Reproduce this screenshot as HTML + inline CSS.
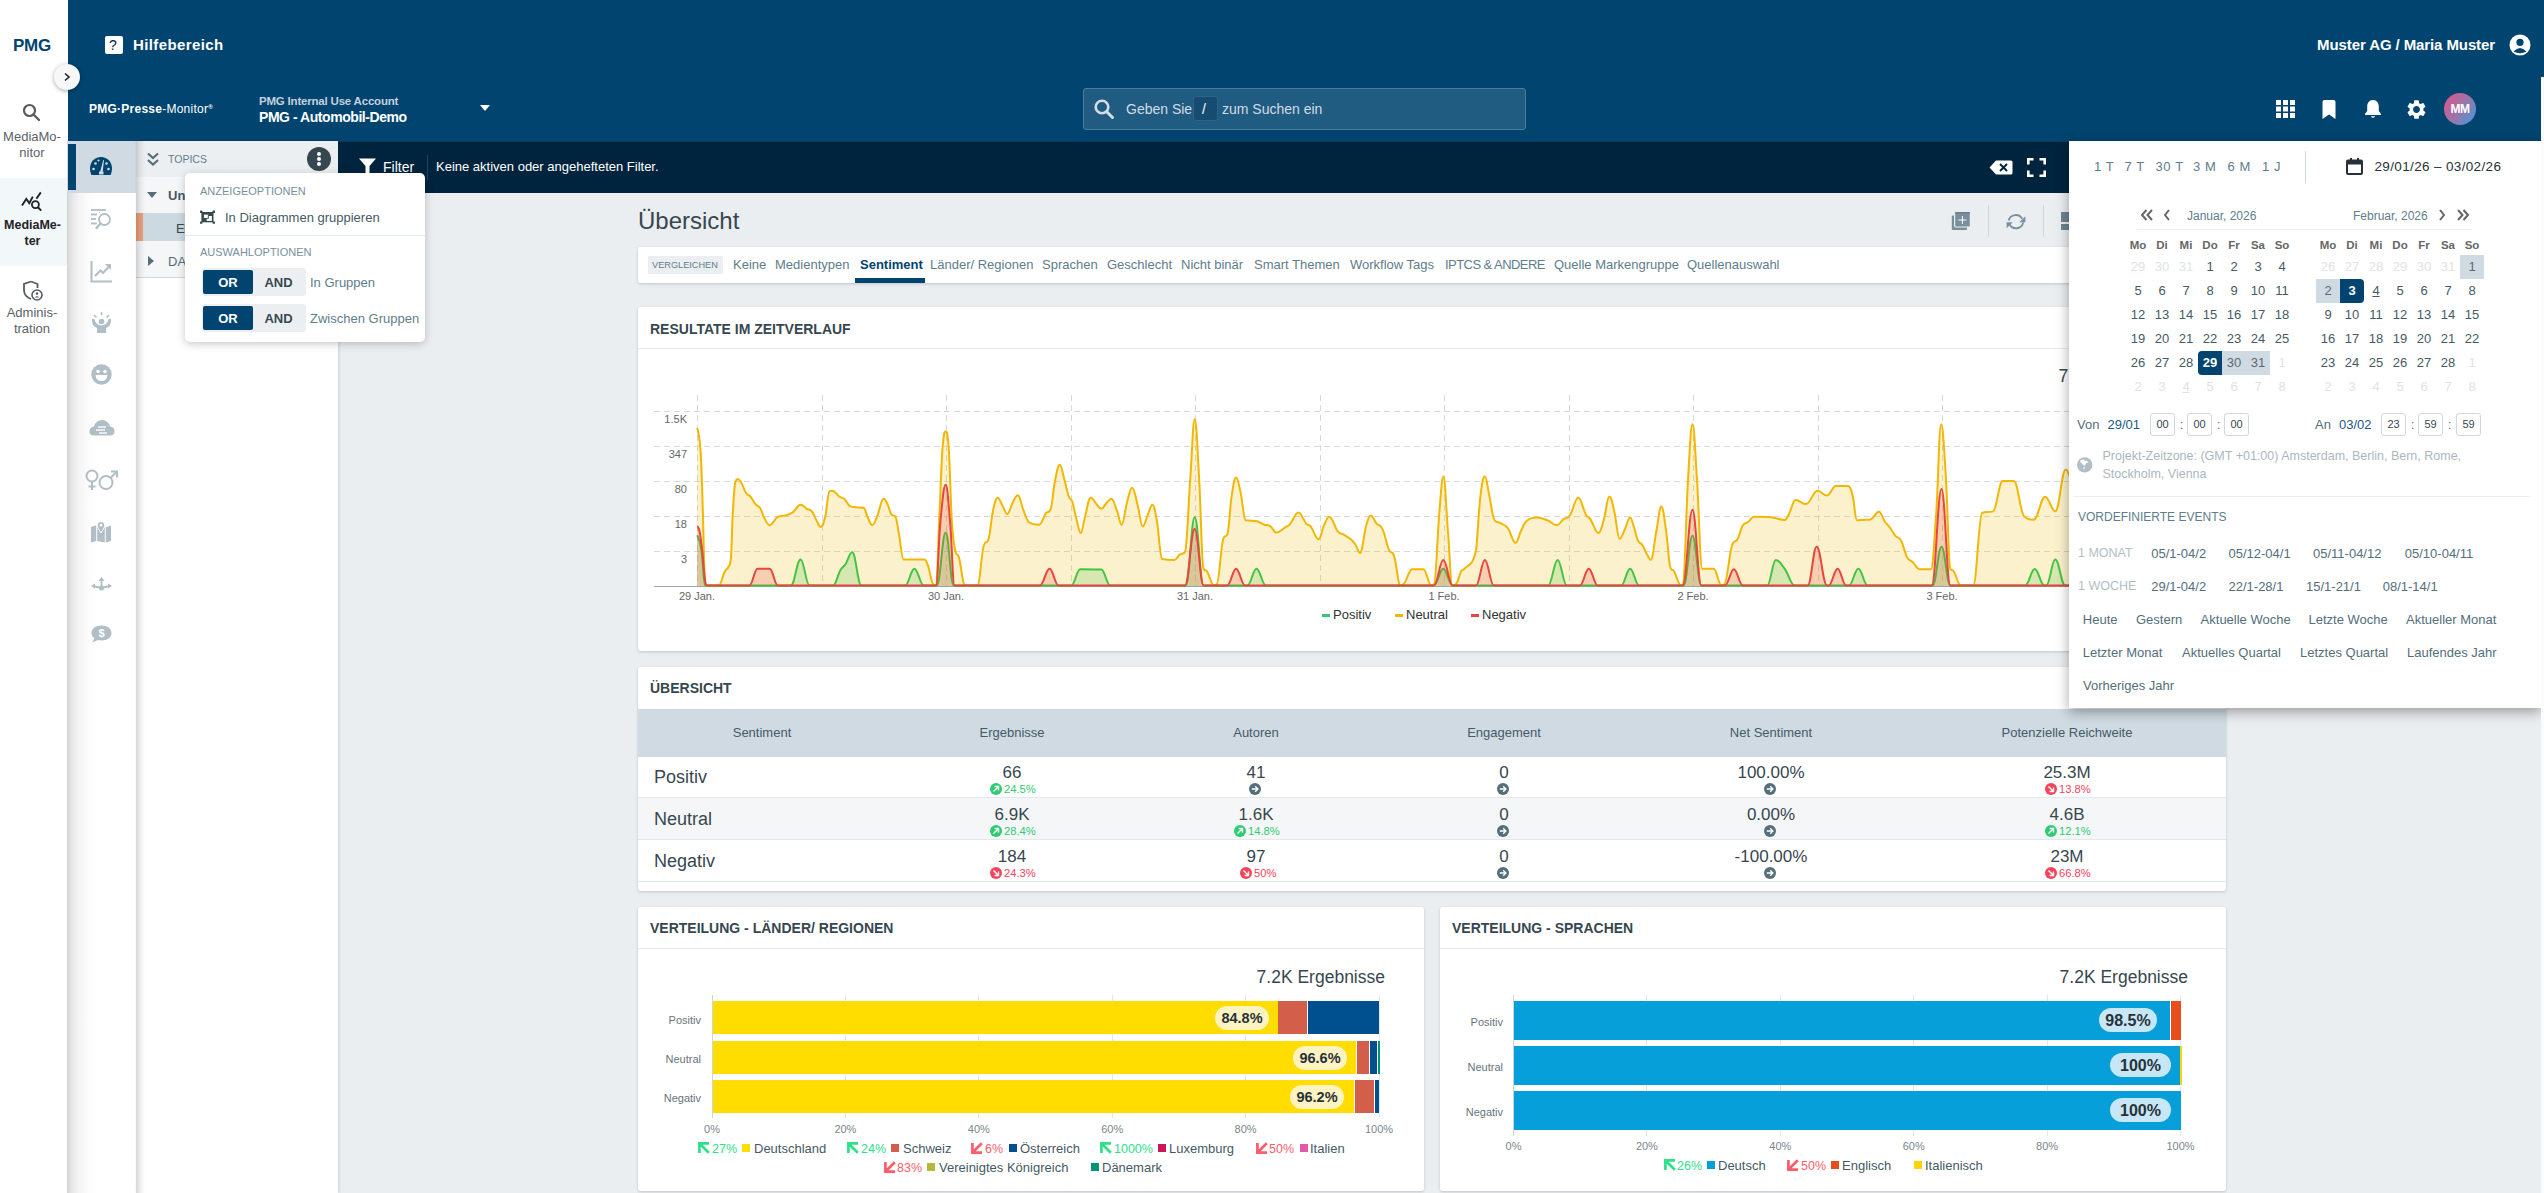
<!DOCTYPE html>
<html><head><meta charset="utf-8">
<style>
*{box-sizing:border-box;margin:0;padding:0}
html,body{width:2544px;height:1193px;overflow:hidden;background:#ebeef1;font-family:"Liberation Sans",sans-serif;color:#37474f}
.a{position:absolute}
.t{position:absolute;white-space:nowrap;line-height:1}
#leftnav{left:0;top:0;width:68px;height:1193px;background:#fff}
#header{left:68px;top:0;width:2476px;height:141px;background:#00446f}
#iconbar{left:67px;top:141px;width:69px;height:1052px;background:linear-gradient(to right,#d2d2d2 0,#dedede 2px,#e9e9e9 6px,#f4f4f4 12px,#fbfbfb 20px,#fff 30px)}
#topics{left:136px;top:141px;width:202px;height:1052px;background:#fff;box-shadow:1px 0 3px rgba(0,0,0,.12)}
#filterbar{left:338px;top:141px;width:2206px;height:52px;background:#00243d}
.card{position:absolute;background:#fff;border-radius:3px;box-shadow:0 1px 3px rgba(0,0,0,.18)}
.ch{position:absolute;left:12px;top:0;font-weight:bold;font-size:15px;color:#37474f;line-height:1}
</style></head><body>
<!-- LEFT NAV -->
<div id="leftnav" class="a">
  <div class="t" style="left:13px;top:37px;font-size:17px;font-weight:bold;color:#00446f;letter-spacing:-0.3px">PMG</div>
  <svg class="a" style="left:21px;top:102px" width="20" height="20" viewBox="0 0 20 20"><circle cx="8.5" cy="8.5" r="5.5" fill="none" stroke="#555d62" stroke-width="2.2"/><line x1="12.5" y1="12.5" x2="18" y2="18" stroke="#555d62" stroke-width="2.4" stroke-linecap="round"/></svg>
  <div class="t" style="left:0;width:64px;text-align:center;top:129px;font-size:13px;color:#5b6367;line-height:16px">MediaMo-<br>nitor</div>
  <div class="a" style="left:0;top:178px;width:68px;height:88px;background:#f2f7fa"></div>
  <svg class="a" style="left:21px;top:191px" width="22" height="21" viewBox="0 0 22 21"><polyline points="1,14.6 5.3,8 8.3,12.1 11.8,5.6" fill="none" stroke="#1f2326" stroke-width="1.9" stroke-linejoin="miter"/><line x1="15.4" y1="7.8" x2="19.8" y2="1.4" stroke="#1f2326" stroke-width="1.9"/><circle cx="14.4" cy="13.6" r="3.5" fill="none" stroke="#1f2326" stroke-width="1.8"/><line x1="16.9" y1="16.3" x2="20.2" y2="19.6" stroke="#1f2326" stroke-width="2"/></svg>
  <div class="t" style="left:0;width:65px;text-align:center;top:217px;font-size:12.5px;font-weight:bold;color:#1f2326;line-height:16px">MediaMe-<br>ter</div>
  <svg class="a" style="left:22px;top:280px" width="22" height="22" viewBox="0 0 22 22"><path d="M9 1.5 L2 4 V10 C2 14.5 5 17.5 9 19 M9 1.5 L15.5 4 V8" fill="none" stroke="#555d62" stroke-width="1.8"/><circle cx="15" cy="15" r="5" fill="#fff" stroke="#555d62" stroke-width="1.6"/><circle cx="15" cy="13.5" r="1.2" fill="#555d62"/><path d="M12.8 17.5 Q15 15 17.2 17.5" fill="#555d62"/></svg>
  <div class="t" style="left:0;width:64px;text-align:center;top:305px;font-size:13px;color:#5b6367;line-height:16px">Adminis-<br>tration</div>
</div>
<div class="a" style="left:54px;top:64px;width:26px;height:26px;border-radius:50%;background:#f7f7f7;box-shadow:0 1px 4px rgba(0,0,0,.35);z-index:5"></div>
<svg class="a" style="z-index:6;left:62px;top:72px" width="10" height="10" viewBox="0 0 10 10"><polyline points="3,1.5 7,5 3,8.5" fill="none" stroke="#222" stroke-width="1.6"/></svg>

<!-- HEADER -->
<div id="header" class="a">
  <div class="a" style="left:37px;top:36px;width:18px;height:18px;background:#fff;border-radius:2px"></div>
  <div class="t" style="left:41px;top:38px;font-size:14px;color:#00243d;font-weight:normal">?</div>
  <div class="t" style="left:65px;top:37px;font-size:15px;font-weight:bold;color:#fff;letter-spacing:0.4px">Hilfebereich</div>
  <div class="t" style="right:49px;top:37px;font-size:15px;font-weight:bold;color:#fff;letter-spacing:-0.1px">Muster AG / Maria Muster</div>
  <svg class="a" style="left:2441px;top:34px" width="22" height="22" viewBox="0 0 22 22"><circle cx="11" cy="11" r="10.5" fill="#fff"/><circle cx="11" cy="8.3" r="3.6" fill="#00446f"/><path d="M4.5 17.5 Q11 10.5 17.5 17.5 Q11 21 4.5 17.5Z" fill="#00446f"/></svg>
  <div class="t" style="left:21px;top:103px;font-size:12px;font-weight:bold;color:#fff;letter-spacing:0.25px">PMG·Presse<span style="font-weight:normal">-Monitor</span><sup style="font-size:6px;vertical-align:4px">®</sup></div>
  <div class="t" style="left:191px;top:96px;font-size:11.5px;font-weight:bold;color:#c3d2dc;letter-spacing:-0.2px">PMG Internal Use Account</div>
  <div class="t" style="left:191px;top:110px;font-size:14px;font-weight:bold;color:#fff;letter-spacing:-0.45px">PMG - Automobil-Demo</div>
  <svg class="a" style="left:412px;top:105px" width="10" height="6" viewBox="0 0 10 6"><polygon points="0,0 10,0 5,6" fill="#fff"/></svg>
  <div class="a" style="left:1015px;top:88px;width:443px;height:42px;background:#205b82;border:1px solid #4f7c9a;border-radius:3px"></div>
  <svg class="a" style="left:1025px;top:98px" width="22" height="22" viewBox="0 0 22 22"><circle cx="9" cy="9" r="6.3" fill="none" stroke="#d2dde5" stroke-width="2.6"/><line x1="13.5" y1="13.5" x2="19.5" y2="19.5" stroke="#d2dde5" stroke-width="3" stroke-linecap="round"/></svg>
  <div class="t" style="left:1058px;top:102px;font-size:14px;color:#d2dde5">Geben Sie</div>
  <div class="a" style="left:1125px;top:96px;width:25px;height:25px;background:#164c71;border:1px solid #2f6385;border-radius:3px"></div>
  <div class="t" style="left:1134px;top:102px;font-size:14px;color:#fff">/</div>
  <div class="t" style="left:1154px;top:102px;font-size:14px;color:#d2dde5">zum Suchen ein</div>
  <!-- right icons -->
  <svg class="a" style="left:2208px;top:100px" width="19" height="18" viewBox="0 0 19 18"><g fill="#fff"><rect x="0" y="0" width="5" height="5"/><rect x="7" y="0" width="5" height="5"/><rect x="14" y="0" width="5" height="5"/><rect x="0" y="6.5" width="5" height="5"/><rect x="7" y="6.5" width="5" height="5"/><rect x="14" y="6.5" width="5" height="5"/><rect x="0" y="13" width="5" height="5"/><rect x="7" y="13" width="5" height="5"/><rect x="14" y="13" width="5" height="5"/></g></svg>
  <svg class="a" style="left:2253px;top:100px" width="16" height="19" viewBox="0 0 16 19"><path d="M1.5 2 Q1.5 0 3.5 0 H12.5 Q14.5 0 14.5 2 V19 L8 14.5 L1.5 19Z" fill="#fff"/></svg>
  <svg class="a" style="left:2296px;top:99px" width="18" height="20" viewBox="0 0 18 20"><path d="M9 1 C5 1 3.2 4 3.2 7.5 V12 L1 15 V16 H17 V15 L14.8 12 V7.5 C14.8 4 13 1 9 1Z" fill="#fff"/><path d="M6.8 17.2 Q9 20.5 11.2 17.2Z" fill="#fff"/></svg>
  <svg class="a" style="left:2337px;top:98px" width="23" height="23" viewBox="0 0 24 24"><path fill="#fff" d="M19.14 12.94c.04-.3.06-.61.06-.94 0-.32-.02-.64-.07-.94l2.03-1.58a.49.49 0 0 0 .12-.61l-1.92-3.32a.49.49 0 0 0-.59-.22l-2.39.96c-.5-.38-1.03-.7-1.62-.94l-.36-2.54a.48.48 0 0 0-.48-.41h-3.84c-.24 0-.43.17-.47.41l-.36 2.54c-.59.24-1.13.57-1.62.94l-2.39-.96a.48.48 0 0 0-.59.22L2.74 8.87c-.12.21-.08.47.12.61l2.03 1.58c-.05.3-.09.63-.09.94s.02.64.07.94l-2.03 1.58a.49.49 0 0 0-.12.61l1.92 3.32c.12.22.37.29.59.22l2.39-.96c.5.38 1.03.7 1.62.94l.36 2.54c.05.24.24.41.48.41h3.84c.24 0 .44-.17.47-.41l.36-2.54c.59-.24 1.13-.56 1.62-.94l2.39.96c.22.08.47 0 .59-.22l1.92-3.32c.12-.22.07-.47-.12-.61l-2.01-1.58zM12 15.6c-1.98 0-3.6-1.62-3.6-3.6s1.62-3.6 3.6-3.6 3.6 1.62 3.6 3.6-1.62 3.6-3.6 3.6z"/></svg>
  <div class="a" style="left:2376px;top:93px;width:32px;height:32px;border-radius:50%;background:linear-gradient(125deg,#e0528a 0%,#a471a3 45%,#3f9ce0 100%)"></div>
  <div class="t" style="left:2376px;width:32px;text-align:center;top:103px;font-size:12px;font-weight:bold;color:#fff;letter-spacing:-0.5px">MM</div>
</div>
<div class="a" style="left:2541px;top:77px;width:3px;height:1116px;background:#fbfbfb;z-index:20"></div>
<!-- ICON BAR -->
<div id="iconbar" class="a">
  <div class="a" style="left:1px;top:0;width:68px;height:52px;background:#cfdae3"></div>
  <div class="a" style="left:1px;top:3px;width:8px;height:46px;background:#00446f"></div>
  <svg class="a" style="left:22px;top:15px" width="24" height="20" viewBox="0 0 24 20"><path d="M12 1 C5.5 1 1 6 1 12.5 C1 15 1.6 17 2.5 19 H21.5 C22.4 17 23 15 23 12.5 C23 6 18.5 1 12 1Z" fill="#00446f"/><g fill="#cfdae3"><circle cx="4.5" cy="13" r="1.3"/><circle cx="6.5" cy="7.5" r="1.3"/><circle cx="17.5" cy="7.5" r="1.3"/><circle cx="19.5" cy="13" r="1.3"/><circle cx="9.5" cy="4.5" r="1.1"/></g><path d="M11 16.5 L14.2 4 L15 4.2 L13.6 16.8Z" fill="#cfdae3"/><rect x="10" y="15.5" width="4.5" height="3" fill="#cfdae3"/></svg>
  <svg class="a" style="left:23px;top:67px" width="23" height="22" viewBox="0 0 23 22"><g stroke="#b0bec5" stroke-width="1.8" fill="none"><line x1="1" y1="2" x2="16" y2="2"/><line x1="1" y1="6.5" x2="7" y2="6.5"/><line x1="1" y1="11" x2="6" y2="11"/><line x1="1" y1="15.5" x2="7" y2="15.5"/><circle cx="14.5" cy="11.5" r="5.5"/><line x1="10.5" y1="15.5" x2="6.5" y2="20" stroke-width="2.4" stroke-linecap="round"/></g><g fill="#b0bec5"><rect x="9" y="4" width="1" height="1"/></g></svg>
  <svg class="a" style="left:23px;top:120px" width="23" height="22" viewBox="0 0 23 22"><g fill="none" stroke="#b0bec5" stroke-width="2"><polyline points="1.5,0 1.5,20.5 22,20.5"/><polyline points="5,15 10.5,9.5 13,12 19,5.5"/></g><polygon points="15,3 21,3 21,9" fill="#b0bec5"/></svg>
  <svg class="a" style="left:24px;top:171px" width="21" height="22" viewBox="0 0 21 22"><g stroke="#b0bec5" stroke-width="1.6"><line x1="10.5" y1="0" x2="10.5" y2="3"/><line x1="3" y1="3" x2="5.5" y2="5.5"/><line x1="18" y1="3" x2="15.5" y2="5.5"/></g><circle cx="10.5" cy="9.5" r="2.8" fill="#b0bec5"/><path d="M1 7 Q0.5 14 6 16 V21 H15 V16 Q20.5 14 20 7 H17.5 Q17 12.5 10.5 13.5 Q4 12.5 3.5 7Z" fill="#b0bec5"/></svg>
  <svg class="a" style="left:24px;top:223px" width="21" height="21" viewBox="0 0 21 21"><circle cx="10.5" cy="10.5" r="10.2" fill="#b0bec5"/><circle cx="7" cy="7.5" r="1.8" fill="#fff"/><circle cx="14" cy="7.5" r="1.8" fill="#fff"/><path d="M4.5 11 H16.5 Q16 17 10.5 17 Q5 17 4.5 11Z" fill="#fff"/></svg>
  <svg class="a" style="left:22px;top:278px" width="26" height="17" viewBox="0 0 26 17"><path d="M5 16.5 Q0 16.5 0.5 11.5 Q1 8 5 7.5 Q7 1 13 1 Q19 1 21 7.5 Q25.5 8 25.5 12 Q25.5 16.5 21 16.5Z" fill="#b0bec5"/><g stroke="#fff" stroke-width="1.4"><line x1="9" y1="8" x2="17" y2="8"/><line x1="7" y1="11" x2="16" y2="11"/><line x1="10" y1="14" x2="18" y2="14"/></g></svg>
  <svg class="a" style="left:18px;top:328px" width="34" height="22" viewBox="0 0 34 22"><g fill="none" stroke="#b0bec5" stroke-width="2"><circle cx="7" cy="7" r="5.5"/><line x1="7" y1="12.5" x2="7" y2="21"/><line x1="3.5" y1="17.5" x2="10.5" y2="17.5"/><circle cx="21" cy="13.5" r="6.5"/><line x1="25.5" y1="9" x2="31.5" y2="3"/><polyline points="26,2.5 32,2.5 32,8.5"/></g></svg>
  <svg class="a" style="left:24px;top:380px" width="20" height="22" viewBox="0 0 20 22"><path d="M0 6 L5.2 4.2 V20 L0 21.5Z M6.2 4.5 L13.8 6.2 V21.5 L6.2 20Z M14.8 6.2 L20 4.4 V20 L14.8 21.5Z" fill="#b0bec5"/><path d="M10 0.6 C12.3 0.6 13.8 2.3 13.8 4.3 C13.8 6.3 11.5 9.5 10 12 C8.5 9.5 6.2 6.3 6.2 4.3 C6.2 2.3 7.7 0.6 10 0.6Z" fill="#b0bec5" stroke="#fff" stroke-width="1"/><circle cx="10" cy="4.2" r="1.4" fill="#fff"/></svg>
  <svg class="a" style="left:24px;top:436px" width="21" height="16" viewBox="0 0 21 16"><g stroke="#b0bec5" stroke-width="1.8" fill="none"><line x1="10.5" y1="3" x2="10.5" y2="11"/><line x1="10.5" y1="11" x2="2" y2="9"/><line x1="10.5" y1="11" x2="19" y2="9"/></g><circle cx="10.5" cy="11" r="2.5" fill="#b0bec5"/><polygon points="10.5,0 7.5,4 13.5,4" fill="#b0bec5"/><polygon points="0,9 4,6.5 4,11.5" fill="#b0bec5"/><polygon points="21,9 17,6.5 17,11.5" fill="#b0bec5"/></svg>
  <svg class="a" style="left:24px;top:484px" width="21" height="18" viewBox="0 0 21 18"><path d="M10.5 0.5 C16.5 0.5 20.5 3.5 20.5 8 C20.5 12.5 16.5 15.5 10.5 15.5 C9 15.5 8 15.3 7 15 L1.5 17.5 L3.2 13.2 C1.5 11.8 0.5 10 0.5 8 C0.5 3.5 4.5 0.5 10.5 0.5Z" fill="#b0bec5"/><text x="10.5" y="12.3" text-anchor="middle" font-family="Liberation Sans" font-weight="bold" font-size="11" fill="#fff">$</text></svg>
</div>

<!-- TOPICS PANEL -->
<div id="topics" class="a">
  <div class="a" style="left:0;top:0;width:202px;height:36px;background:#eceff1"></div>
  <div class="a" style="left:0;top:36px;width:202px;height:101px;background:#f5f6f7;border-bottom:1px solid #cfd8dc"></div>
  <svg class="a" style="left:11px;top:11px" width="12" height="15" viewBox="0 0 12 15"><g fill="none" stroke="#546e7a" stroke-width="2.2"><polyline points="1,1.5 6,6 11,1.5"/><polyline points="1,8 6,12.5 11,8"/></g></svg>
  <div class="t" style="left:32px;top:13px;font-size:10.5px;color:#607d8b">TOPICS</div>
  <div class="a" style="left:171px;top:6px;width:24px;height:24px;border-radius:50%;background:#37474f"></div>
  <g></g>
  <div class="a" style="left:181px;top:11px;width:4px;height:4px;border-radius:50%;background:#fff"></div>
  <div class="a" style="left:181px;top:16px;width:4px;height:4px;border-radius:50%;background:#fff"></div>
  <div class="a" style="left:181px;top:21px;width:4px;height:4px;border-radius:50%;background:#fff"></div>
  <svg class="a" style="left:11px;top:51px" width="10" height="6" viewBox="0 0 10 6"><polygon points="0,0 10,0 5,6" fill="#546e7a"/></svg>
  <div class="t" style="left:32px;top:48px;font-size:13px;font-weight:bold;color:#455a64">Ung</div>
  <div class="a" style="left:0;top:72px;width:202px;height:28px;background:#cdd9e1"></div>
  <div class="a" style="left:0;top:72px;width:7px;height:28px;background:#eea07e"></div>
  <div class="t" style="left:40px;top:81px;font-size:13px;color:#37474f;letter-spacing:-0.6px">El</div>
  <svg class="a" style="left:12px;top:115px" width="6" height="10" viewBox="0 0 6 10"><polygon points="0,0 6,5 0,10" fill="#546e7a"/></svg>
  <div class="t" style="left:32px;top:114px;font-size:13px;color:#546e7a">DA</div>
  <div class="a" style="left:0;top:0;width:9px;height:1052px;background:linear-gradient(to right,rgba(0,0,0,.17) 0,rgba(0,0,0,.11) 2px,rgba(0,0,0,.05) 5px,rgba(0,0,0,0) 9px)"></div>
</div>

<!-- FILTER BAR -->
<div id="filterbar" class="a">
  <div class="a" style="left:0;top:0;width:2206px;height:1px;background:#0a3c60"></div>
  <svg class="a" style="left:21px;top:17px" width="17" height="18" viewBox="0 0 17 18"><path d="M0 0.5 H17 L10.5 8 V17.5 L6.5 15.5 V8Z" fill="#fff"/></svg>
  <div class="t" style="left:45px;top:19px;font-size:14px;color:#fff">Filter</div>
  <div class="a" style="left:89px;top:14px;width:1px;height:25px;background:#1a4468"></div>
  <div class="t" style="left:98px;top:19px;font-size:13px;color:#fff">Keine aktiven oder angehefteten Filter.</div>
  <svg class="a" style="left:1651px;top:19px" width="24" height="15" viewBox="0 0 24 15"><path d="M7 0.5 H22 Q23.5 0.5 23.5 2 V13 Q23.5 14.5 22 14.5 H7 L0.5 7.5Z" fill="#fff"/><g stroke="#00243d" stroke-width="2"><line x1="11" y1="4" x2="18" y2="11"/><line x1="18" y1="4" x2="11" y2="11"/></g></svg>
  <svg class="a" style="left:1689px;top:17px" width="19" height="19" viewBox="0 0 19 19"><g fill="none" stroke="#fff" stroke-width="2.6"><polyline points="1.3,6.5 1.3,1.3 6.5,1.3"/><polyline points="12.5,1.3 17.7,1.3 17.7,6.5"/><polyline points="17.7,12.5 17.7,17.7 12.5,17.7"/><polyline points="6.5,17.7 1.3,17.7 1.3,12.5"/></g></svg>
</div>

<!-- POPUP -->
<div id="pop" class="a" style="left:185px;top:173px;width:240px;height:169px;background:#fff;border-radius:5px;box-shadow:0 2px 8px rgba(0,0,0,.22)">
  <div class="t" style="left:15px;top:13px;font-size:11px;color:#78909c">ANZEIGEOPTIONEN</div>
  <svg class="a" style="left:11px;top:33px" width="24" height="24" viewBox="0 0 24 24"><rect x="5.4" y="6" width="12.1" height="10.3" fill="#37474f"/><rect x="10.7" y="10" width="5.2" height="4.9" fill="#fff"/><rect x="7.5" y="8.1" width="4.8" height="4.3" fill="#fff" stroke="#37474f" stroke-width="0.9"/><g fill="#37474f"><rect x="4" y="4.6" width="2.4" height="2.4" rx="0.6"/><rect x="16.6" y="4.6" width="2.4" height="2.4" rx="0.6"/><rect x="4" y="15.4" width="2.4" height="2.4" rx="0.6"/><rect x="16.6" y="15.4" width="2.4" height="2.4" rx="0.6"/></g></svg>
  <div class="t" style="left:40px;top:38px;font-size:13px;color:#455a64">In Diagrammen gruppieren</div>
  <div class="a" style="left:0;top:62px;width:240px;height:1px;background:#e3e8eb"></div>
  <div class="t" style="left:15px;top:74px;font-size:11px;color:#78909c">AUSWAHLOPTIONEN</div>
  <div class="a" style="left:17px;top:95px;width:104px;height:28px;background:#eceff1;border-radius:3px"></div>
  <div class="a" style="left:18px;top:97px;width:50px;height:24px;background:#00446f;border-radius:2px"></div>
  <div class="t" style="left:18px;width:50px;text-align:center;top:103px;font-size:13px;font-weight:bold;color:#fff">OR</div>
  <div class="t" style="left:68px;width:51px;text-align:center;top:103px;font-size:13px;font-weight:bold;color:#37474f">AND</div>
  <div class="t" style="left:125px;top:103px;font-size:13px;color:#607d8b">In Gruppen</div>
  <div class="a" style="left:17px;top:131px;width:104px;height:28px;background:#eceff1;border-radius:3px"></div>
  <div class="a" style="left:18px;top:133px;width:50px;height:24px;background:#00446f;border-radius:2px"></div>
  <div class="t" style="left:18px;width:50px;text-align:center;top:139px;font-size:13px;font-weight:bold;color:#fff">OR</div>
  <div class="t" style="left:68px;width:51px;text-align:center;top:139px;font-size:13px;font-weight:bold;color:#37474f">AND</div>
  <div class="t" style="left:125px;top:139px;font-size:13px;color:#607d8b">Zwischen Gruppen</div>
</div>
<!-- TITLE + TOOLS -->
<div class="t" style="left:638px;top:209px;font-size:24px;color:#37474f">Übersicht</div>
<svg class="a" style="left:1951px;top:211px" width="20" height="20" viewBox="0 0 20 20"><rect x="0.8" y="4.4" width="15.2" height="14.6" rx="1" fill="#78909c"/><rect x="3.6" y="0.4" width="15.8" height="15.6" rx="1.2" fill="#78909c" stroke="#eceff1" stroke-width="1.2"/><rect x="4.2" y="1" width="14.6" height="1.6" fill="#6a808c"/><g stroke="#fff" stroke-width="1"><line x1="11.4" y1="5" x2="11.4" y2="13"/><line x1="7.4" y1="9" x2="15.4" y2="9"/></g></svg>
<div class="a" style="left:1988px;top:205px;width:1px;height:32px;background:#cfd8dc"></div>
<svg class="a" style="left:2006px;top:212px" width="20" height="19" viewBox="0 0 20 19"><g fill="none" stroke="#78909c" stroke-width="1.9"><path d="M2.6 8.5 A7.4 7.4 0 0 1 16.2 6.8"/><path d="M17.2 10.6 A7.4 7.4 0 0 1 3.6 12.6"/></g><polygon points="19.4,4.2 19.4,10.3 13.3,10.3" fill="#78909c"/><polygon points="0.6,16.3 0.6,10.2 6.7,10.2" fill="#78909c"/></svg>
<div class="a" style="left:2043px;top:205px;width:1px;height:32px;background:#cfd8dc"></div>
<div class="a" style="left:2061px;top:212px;width:12px;height:10px;background:#6f8591"></div>
<div class="a" style="left:2061px;top:224px;width:12px;height:6px;background:#6f8591"></div>

<!-- TABS -->
<div class="card" style="left:638px;top:247px;width:1588px;height:36px;border-radius:2px">
  <div class="a" style="left:10px;top:9px;width:75px;height:18px;background:#eceff1;border-radius:1px"></div>
  <div class="t" style="left:14px;top:14px;font-size:9.2px;color:#607d8b">VERGLEICHEN</div>
  <div class="t" style="left:95px;top:11px;font-size:13px;color:#607d8b">Keine</div>
  <div class="t" style="left:137px;top:11px;font-size:13px;color:#607d8b">Medientypen</div>
  <div class="t" style="left:222px;top:11px;font-size:13px;font-weight:bold;color:#00446f">Sentiment</div>
  <div class="a" style="left:217px;top:31px;width:70px;height:5px;background:#00446f"></div>
  <div class="t" style="left:292px;top:11px;font-size:13px;color:#607d8b">Länder/ Regionen</div>
  <div class="t" style="left:404px;top:11px;font-size:13px;color:#607d8b">Sprachen</div>
  <div class="t" style="left:469px;top:11px;font-size:13px;color:#607d8b">Geschlecht</div>
  <div class="t" style="left:543px;top:11px;font-size:13px;color:#607d8b">Nicht binär</div>
  <div class="t" style="left:616px;top:11px;font-size:13px;color:#607d8b">Smart Themen</div>
  <div class="t" style="left:712px;top:11px;font-size:13px;color:#607d8b">Workflow Tags</div>
  <div class="t" style="left:807px;top:11px;font-size:13px;color:#607d8b;letter-spacing:-0.55px">IPTCS &amp; ANDERE</div>
  <div class="t" style="left:916px;top:11px;font-size:13px;color:#607d8b">Quelle Markengruppe</div>
  <div class="t" style="left:1049px;top:11px;font-size:13px;color:#607d8b">Quellenauswahl</div>
</div>

<!-- CARD 1: RESULTATE -->
<div class="card" style="left:638px;top:307px;width:1588px;height:344px">
  <div class="t" style="left:12px;top:15px;font-size:14px;font-weight:bold;color:#37474f">RESULTATE IM ZEITVERLAUF</div>
  <div class="a" style="left:0;top:41px;width:1588px;height:1px;background:#e6eaed"></div>
  <div class="t" style="right:39px;top:61px;font-size:17.5px;color:#37474f">7.2K Ergebnisse</div>
</div>
<svg class="a" style="left:0;top:0" width="2544" height="1193" viewBox="0 0 2544 1193">
<g stroke="#d9d9d9" stroke-width="1" stroke-dasharray="6,4"><line x1="654" y1="411.5" x2="2226" y2="411.5"/><line x1="654" y1="446.5" x2="2226" y2="446.5"/><line x1="654" y1="481.5" x2="2226" y2="481.5"/><line x1="654" y1="516.5" x2="2226" y2="516.5"/><line x1="654" y1="551.5" x2="2226" y2="551.5"/><line x1="697.5" y1="395" x2="697.5" y2="586"/><line x1="822.5" y1="395" x2="822.5" y2="586"/><line x1="946.5" y1="395" x2="946.5" y2="586"/><line x1="1071.5" y1="395" x2="1071.5" y2="586"/><line x1="1195.5" y1="395" x2="1195.5" y2="586"/><line x1="1320.5" y1="395" x2="1320.5" y2="586"/><line x1="1444.5" y1="395" x2="1444.5" y2="586"/><line x1="1569.5" y1="395" x2="1569.5" y2="586"/><line x1="1693.5" y1="395" x2="1693.5" y2="586"/><line x1="1818.5" y1="395" x2="1818.5" y2="586"/><line x1="1942.5" y1="395" x2="1942.5" y2="586"/></g>
<line x1="654" y1="586.5" x2="2226" y2="586.5" stroke="#9aa5ad" stroke-width="1"/>
<path d="M697.1,427.9C697.1,427.9 698.5,431.8 699.4,439.3C700.1,444.8 700.4,446.0 701.1,460.4C701.8,475.6 702.2,489.6 702.9,513.2C703.6,535.4 703.9,564.4 704.6,574.9C705.2,585.4 705.4,585.4 706.0,585.4C711.1,585.4 713.6,585.4 718.7,585.4C721.2,585.4 722.4,576.0 724.9,571.3C726.3,568.6 727.0,570.2 728.4,567.0C729.4,564.6 730.0,567.0 731.0,557.3C731.7,547.6 732.1,525.3 732.8,513.2C733.9,495.0 734.4,484.1 735.5,481.5C736.5,478.9 737.1,478.9 738.1,478.9C739.5,478.9 740.2,480.8 741.6,483.3C743.4,486.4 744.2,490.4 746.0,493.0C747.8,495.6 748.6,494.4 750.4,496.5C752.5,499.0 753.6,501.9 755.7,504.4C757.5,506.5 758.3,505.2 760.1,508.0C761.9,510.8 762.7,515.4 764.5,518.5C766.6,522.3 767.7,525.2 769.8,525.2C773.0,525.2 774.5,518.2 777.7,516.8C780.9,515.4 782.4,516.3 785.6,515.4C788.4,514.6 789.9,514.4 792.7,512.4C795.9,510.2 797.4,504.8 800.6,504.8C803.1,504.8 804.3,507.3 806.8,508.8C808.9,510.0 809.9,509.0 812.0,511.5C813.8,513.6 814.6,517.2 816.4,520.3C818.2,523.4 819.0,527.0 820.8,527.0C822.6,527.0 823.4,524.0 825.2,516.8C827.0,509.6 827.8,491.7 829.6,491.2C830.7,490.7 831.2,490.7 832.3,490.7C835.1,490.7 836.5,494.6 839.3,496.5C841.4,498.0 842.5,497.3 844.6,499.2C846.7,501.1 847.8,505.3 849.9,506.2C851.7,507.1 852.5,506.9 854.3,507.1C858.2,507.6 860.1,507.1 864.0,508.0C865.4,508.9 866.1,513.9 867.5,516.8C869.4,520.7 870.3,525.2 872.2,525.2C874.1,525.2 875.1,521.2 877.0,516.8C879.7,510.6 881.0,498.8 883.7,498.8C885.3,498.8 886.0,501.2 887.6,504.4C889.0,507.3 889.7,511.4 891.1,514.1C892.9,516.8 893.7,514.1 895.5,516.8C896.9,519.5 897.6,526.9 899.0,534.4C900.8,544.0 901.7,559.4 903.5,559.4C911.9,559.4 916.2,559.4 924.6,559.4C926.0,559.4 926.7,562.0 928.1,566.0C930.2,572.0 931.3,583.2 933.4,584.3C934.4,585.4 935.0,585.4 936.0,585.4C937.4,585.4 938.1,541.7 939.5,513.2C940.9,484.7 941.6,454.2 943.0,442.8C944.1,431.4 944.6,431.4 945.7,431.4C946.7,431.4 947.3,431.4 948.3,442.8C949.7,454.2 950.5,500.0 951.9,522.0C953.3,543.4 954.0,544.9 955.4,551.1C956.8,557.3 957.5,552.3 958.9,557.3C961.4,566.1 962.6,585.4 965.1,585.4C970.0,585.4 972.5,585.4 977.4,585.4C980.2,585.4 981.6,547.5 984.4,544.0C985.8,540.5 986.6,544.0 988.0,540.5C990.1,537.0 991.1,519.0 993.2,509.7C995.0,501.9 995.8,497.7 997.6,497.7C999.4,497.7 1000.2,501.4 1002.0,504.4C1004.1,508.0 1005.2,514.1 1007.3,514.1C1009.4,514.1 1010.5,506.5 1012.6,502.7C1014.7,498.9 1015.8,495.3 1017.9,495.3C1020.0,495.3 1021.1,504.4 1023.2,509.7C1025.3,515.0 1026.4,519.3 1028.5,522.0C1032.7,524.7 1034.8,524.7 1039.0,524.7C1041.8,524.7 1043.2,516.9 1046.0,513.2C1047.8,510.9 1048.7,513.2 1050.5,509.7C1052.3,506.2 1053.1,490.0 1054.9,481.5C1056.9,472.0 1057.8,464.8 1059.8,464.8C1061.6,464.8 1062.6,473.3 1064.4,479.8C1066.2,486.0 1067.0,491.6 1068.8,496.5C1070.2,500.4 1070.9,497.6 1072.3,501.8C1074.1,507.1 1074.9,513.8 1076.7,520.3C1078.3,526.3 1079.2,533.0 1080.8,533.0C1082.3,533.0 1083.1,523.9 1084.6,518.5C1087.1,509.7 1088.3,497.7 1090.8,497.7C1092.9,497.7 1094.0,501.4 1096.1,503.6C1098.2,505.8 1099.3,508.8 1101.4,508.8C1103.5,508.8 1104.6,504.8 1106.7,502.7C1108.6,500.8 1109.5,498.8 1111.4,498.8C1113.7,498.8 1114.9,505.6 1117.2,511.5C1119.0,516.0 1119.8,524.7 1121.6,524.7C1123.7,524.7 1124.8,510.1 1126.9,502.7C1129.0,495.3 1130.1,487.7 1132.2,487.7C1134.3,487.7 1135.4,496.6 1137.5,504.4C1139.6,512.1 1140.6,526.4 1142.7,526.4C1144.8,526.4 1145.9,518.8 1148.0,514.1C1149.8,510.2 1150.6,504.8 1152.4,504.8C1154.2,504.8 1155.0,510.5 1156.8,520.3C1158.9,532.1 1160.0,558.1 1162.1,559.0C1167.0,559.9 1169.5,559.9 1174.4,559.9C1176.5,559.9 1177.6,556.2 1179.7,554.6C1181.8,553.0 1182.9,554.6 1185.0,552.0C1187.1,549.4 1188.2,507.1 1190.3,478.0C1192.1,453.9 1192.9,419.0 1194.7,419.0C1196.5,419.0 1197.3,448.1 1199.1,478.0C1200.9,507.9 1201.7,566.1 1203.5,568.7C1204.9,571.3 1205.6,569.1 1207.0,571.3C1209.8,575.8 1211.2,585.4 1214.0,585.4C1215.1,585.4 1215.6,585.4 1216.7,584.3C1219.5,583.2 1220.9,541.4 1223.7,537.9C1225.1,534.4 1225.9,537.9 1227.3,534.4C1229.1,530.9 1229.9,507.0 1231.7,495.6C1233.5,484.2 1234.3,477.5 1236.1,477.5C1237.9,477.5 1238.7,484.3 1240.5,492.1C1242.6,501.4 1243.6,519.4 1245.7,520.3C1250.3,521.2 1252.6,520.3 1257.2,521.2C1260.0,522.1 1261.3,523.7 1264.1,524.7C1266.2,525.5 1267.3,524.7 1269.4,525.6C1272.2,526.5 1273.6,532.6 1276.4,532.6C1279.9,532.6 1281.7,529.4 1285.2,527.3C1287.0,526.2 1287.8,526.7 1289.6,524.7C1293.1,520.7 1294.9,512.4 1298.4,512.4C1301.6,512.4 1303.1,520.2 1306.3,523.8C1308.1,525.8 1308.9,524.2 1310.7,526.4C1313.9,530.4 1315.5,539.3 1318.7,539.3C1320.8,539.3 1321.8,530.1 1323.9,525.6C1326.0,521.1 1327.1,516.8 1329.2,516.8C1332.7,516.8 1334.5,527.3 1338.0,531.7C1340.1,534.3 1341.2,533.1 1343.3,534.4C1346.5,536.3 1348.0,536.9 1351.2,539.6C1353.0,541.1 1353.8,542.3 1355.6,545.0C1357.4,547.7 1358.2,552.9 1360.0,552.9C1362.5,552.9 1363.7,534.4 1366.2,525.6C1368.0,519.4 1368.8,515.4 1370.6,515.4C1373.1,515.4 1374.3,521.0 1376.8,523.8C1378.9,526.1 1379.9,523.8 1382.0,528.2C1384.8,532.6 1386.3,543.7 1389.1,550.2C1390.9,554.2 1391.7,550.2 1393.5,554.6C1396.3,559.0 1397.7,585.4 1400.5,585.4C1401.6,585.4 1402.1,585.4 1403.2,584.3C1406.7,583.2 1408.5,569.2 1412.0,569.2C1416.6,569.2 1418.8,569.2 1423.4,569.2C1426.6,569.2 1428.1,585.4 1431.3,585.4C1432.4,585.4 1432.9,585.4 1434.0,584.3C1436.1,583.2 1437.2,537.5 1439.3,513.2C1440.9,494.4 1441.8,476.6 1443.4,476.6C1445.2,476.6 1446.1,508.8 1447.9,530.8C1449.7,552.3 1450.5,585.4 1452.3,585.4C1453.7,585.4 1454.4,585.4 1455.8,584.3C1457.9,583.2 1459.0,575.1 1461.1,571.3C1462.5,568.8 1463.2,570.6 1464.6,568.7C1469.2,562.4 1471.5,568.7 1476.1,550.6C1477.9,532.5 1478.7,510.4 1480.5,495.6C1482.3,480.8 1483.1,476.6 1484.9,476.6C1486.7,476.6 1487.5,487.7 1489.3,495.6C1491.4,505.2 1492.5,517.7 1494.6,520.3C1496.7,522.9 1497.8,521.6 1499.9,522.9C1503.1,524.8 1504.6,524.2 1507.8,528.2C1511.0,532.2 1512.5,542.8 1515.7,542.8C1517.8,542.8 1518.9,535.1 1521.0,530.8C1523.1,526.5 1524.2,523.0 1526.3,521.2C1530.5,517.7 1532.6,517.6 1536.8,517.6C1541.0,517.6 1543.2,518.7 1547.4,520.3C1551.3,521.8 1553.2,525.2 1557.1,525.2C1559.5,525.2 1560.8,521.2 1563.2,519.4C1565.7,517.5 1566.9,519.4 1569.4,515.9C1572.9,512.4 1574.7,497.7 1578.2,497.7C1581.4,497.7 1582.9,509.4 1586.1,515.0C1587.9,518.1 1588.7,516.8 1590.5,519.4C1593.7,524.0 1595.3,533.0 1598.5,533.0C1600.6,533.0 1601.6,527.3 1603.7,520.3C1606.0,512.7 1607.1,496.5 1609.4,496.5C1611.4,496.5 1612.3,503.4 1614.3,511.5C1616.4,520.3 1617.5,538.8 1619.6,538.8C1621.7,538.8 1622.8,533.4 1624.9,529.1C1627.0,524.9 1628.0,517.6 1630.1,517.6C1631.5,517.6 1632.1,521.6 1633.5,525.6C1635.3,530.8 1636.1,536.6 1637.9,540.5C1639.7,544.4 1640.5,542.3 1642.3,544.9C1644.1,547.5 1644.9,550.6 1646.7,553.7C1648.3,556.6 1649.2,559.9 1650.8,559.9C1653.0,559.9 1654.2,542.2 1656.4,530.8C1658.4,520.8 1659.3,506.5 1661.3,506.5C1663.2,506.5 1664.2,518.0 1666.1,530.8C1667.9,542.5 1668.7,564.3 1670.5,567.8C1671.9,571.3 1672.6,569.0 1674.0,571.3C1676.8,576.0 1678.3,585.4 1681.1,585.4C1681.8,585.4 1682.1,585.4 1682.8,584.3C1684.9,583.2 1686.0,513.0 1688.1,478.0C1689.9,449.0 1690.7,424.3 1692.5,424.3C1694.3,424.3 1695.1,451.8 1696.9,478.0C1699.0,509.6 1700.1,568.7 1702.2,568.7C1706.8,568.7 1709.0,568.7 1713.6,568.7C1716.8,568.7 1718.3,585.4 1721.5,585.4C1722.6,585.4 1723.1,585.4 1724.2,584.3C1727.7,583.2 1729.5,546.8 1733.0,543.2C1734.8,539.6 1735.6,542.8 1737.4,539.6C1739.5,535.8 1740.6,529.1 1742.7,525.6C1744.8,522.1 1745.9,523.6 1748.0,522.0C1750.4,520.1 1751.7,516.8 1754.1,516.8C1760.1,516.8 1763.1,516.8 1769.1,517.1C1775.4,517.4 1778.6,519.9 1784.9,519.9C1786.7,519.9 1787.5,516.5 1789.3,513.2C1791.8,508.5 1793.0,500.0 1795.5,500.0C1799.7,500.0 1801.9,504.1 1806.1,504.1C1810.7,504.1 1812.9,490.7 1817.5,490.7C1821.3,490.7 1823.2,495.6 1827.0,495.6C1830.5,495.6 1832.3,486.0 1835.8,486.0C1840.8,486.0 1843.2,486.0 1848.2,486.0C1850.0,486.0 1850.8,488.7 1852.6,495.6C1854.4,502.5 1855.2,520.3 1857.0,520.3C1859.4,520.3 1860.7,520.1 1863.1,519.9C1865.9,519.7 1867.4,519.9 1870.2,519.4C1873.7,518.9 1875.5,511.8 1879.0,511.8C1881.4,511.8 1882.7,518.5 1885.1,522.0C1886.9,524.5 1887.7,524.7 1889.5,527.0C1892.0,530.3 1893.2,533.2 1895.7,536.1C1897.8,538.6 1898.9,536.6 1901.0,540.5C1903.4,545.0 1904.7,552.8 1907.1,557.3C1909.2,561.2 1910.3,559.7 1912.4,561.7C1915.2,564.4 1916.7,569.2 1919.5,569.2C1924.1,569.2 1926.3,569.2 1930.9,569.2C1933.0,569.2 1934.1,543.3 1936.2,513.2C1938.2,485.4 1939.1,424.3 1941.1,424.3C1943.0,424.3 1944.0,447.9 1945.9,478.0C1947.7,505.6 1948.5,566.1 1950.3,568.7C1951.7,571.3 1952.4,569.1 1953.8,571.3C1956.6,575.8 1958.0,585.4 1960.8,585.4C1965.8,585.4 1968.2,585.4 1973.2,585.4C1976.8,585.4 1978.6,514.2 1982.2,512.8C1986.5,511.4 1988.7,512.8 1993.0,511.4C1996.9,510.0 1998.8,481.0 2002.7,481.0C2007.1,481.0 2009.4,481.0 2013.8,481.0C2018.0,481.0 2020.1,513.5 2024.3,516.6C2028.1,519.7 2029.9,519.7 2033.7,519.7C2038.3,519.7 2040.6,496.7 2045.2,496.7C2049.2,496.7 2051.3,511.3 2055.3,511.3C2059.5,511.3 2061.6,469.4 2065.8,469.4C2069.5,469.4 2075.0,500.0 2075.0,500.0L2075.0,586L697.1,586Z" fill="#f2b705" fill-opacity="0.2"/><path d="M697.1,427.9C697.1,427.9 698.5,431.8 699.4,439.3C700.1,444.8 700.4,446.0 701.1,460.4C701.8,475.6 702.2,489.6 702.9,513.2C703.6,535.4 703.9,564.4 704.6,574.9C705.2,585.4 705.4,585.4 706.0,585.4C711.1,585.4 713.6,585.4 718.7,585.4C721.2,585.4 722.4,576.0 724.9,571.3C726.3,568.6 727.0,570.2 728.4,567.0C729.4,564.6 730.0,567.0 731.0,557.3C731.7,547.6 732.1,525.3 732.8,513.2C733.9,495.0 734.4,484.1 735.5,481.5C736.5,478.9 737.1,478.9 738.1,478.9C739.5,478.9 740.2,480.8 741.6,483.3C743.4,486.4 744.2,490.4 746.0,493.0C747.8,495.6 748.6,494.4 750.4,496.5C752.5,499.0 753.6,501.9 755.7,504.4C757.5,506.5 758.3,505.2 760.1,508.0C761.9,510.8 762.7,515.4 764.5,518.5C766.6,522.3 767.7,525.2 769.8,525.2C773.0,525.2 774.5,518.2 777.7,516.8C780.9,515.4 782.4,516.3 785.6,515.4C788.4,514.6 789.9,514.4 792.7,512.4C795.9,510.2 797.4,504.8 800.6,504.8C803.1,504.8 804.3,507.3 806.8,508.8C808.9,510.0 809.9,509.0 812.0,511.5C813.8,513.6 814.6,517.2 816.4,520.3C818.2,523.4 819.0,527.0 820.8,527.0C822.6,527.0 823.4,524.0 825.2,516.8C827.0,509.6 827.8,491.7 829.6,491.2C830.7,490.7 831.2,490.7 832.3,490.7C835.1,490.7 836.5,494.6 839.3,496.5C841.4,498.0 842.5,497.3 844.6,499.2C846.7,501.1 847.8,505.3 849.9,506.2C851.7,507.1 852.5,506.9 854.3,507.1C858.2,507.6 860.1,507.1 864.0,508.0C865.4,508.9 866.1,513.9 867.5,516.8C869.4,520.7 870.3,525.2 872.2,525.2C874.1,525.2 875.1,521.2 877.0,516.8C879.7,510.6 881.0,498.8 883.7,498.8C885.3,498.8 886.0,501.2 887.6,504.4C889.0,507.3 889.7,511.4 891.1,514.1C892.9,516.8 893.7,514.1 895.5,516.8C896.9,519.5 897.6,526.9 899.0,534.4C900.8,544.0 901.7,559.4 903.5,559.4C911.9,559.4 916.2,559.4 924.6,559.4C926.0,559.4 926.7,562.0 928.1,566.0C930.2,572.0 931.3,583.2 933.4,584.3C934.4,585.4 935.0,585.4 936.0,585.4C937.4,585.4 938.1,541.7 939.5,513.2C940.9,484.7 941.6,454.2 943.0,442.8C944.1,431.4 944.6,431.4 945.7,431.4C946.7,431.4 947.3,431.4 948.3,442.8C949.7,454.2 950.5,500.0 951.9,522.0C953.3,543.4 954.0,544.9 955.4,551.1C956.8,557.3 957.5,552.3 958.9,557.3C961.4,566.1 962.6,585.4 965.1,585.4C970.0,585.4 972.5,585.4 977.4,585.4C980.2,585.4 981.6,547.5 984.4,544.0C985.8,540.5 986.6,544.0 988.0,540.5C990.1,537.0 991.1,519.0 993.2,509.7C995.0,501.9 995.8,497.7 997.6,497.7C999.4,497.7 1000.2,501.4 1002.0,504.4C1004.1,508.0 1005.2,514.1 1007.3,514.1C1009.4,514.1 1010.5,506.5 1012.6,502.7C1014.7,498.9 1015.8,495.3 1017.9,495.3C1020.0,495.3 1021.1,504.4 1023.2,509.7C1025.3,515.0 1026.4,519.3 1028.5,522.0C1032.7,524.7 1034.8,524.7 1039.0,524.7C1041.8,524.7 1043.2,516.9 1046.0,513.2C1047.8,510.9 1048.7,513.2 1050.5,509.7C1052.3,506.2 1053.1,490.0 1054.9,481.5C1056.9,472.0 1057.8,464.8 1059.8,464.8C1061.6,464.8 1062.6,473.3 1064.4,479.8C1066.2,486.0 1067.0,491.6 1068.8,496.5C1070.2,500.4 1070.9,497.6 1072.3,501.8C1074.1,507.1 1074.9,513.8 1076.7,520.3C1078.3,526.3 1079.2,533.0 1080.8,533.0C1082.3,533.0 1083.1,523.9 1084.6,518.5C1087.1,509.7 1088.3,497.7 1090.8,497.7C1092.9,497.7 1094.0,501.4 1096.1,503.6C1098.2,505.8 1099.3,508.8 1101.4,508.8C1103.5,508.8 1104.6,504.8 1106.7,502.7C1108.6,500.8 1109.5,498.8 1111.4,498.8C1113.7,498.8 1114.9,505.6 1117.2,511.5C1119.0,516.0 1119.8,524.7 1121.6,524.7C1123.7,524.7 1124.8,510.1 1126.9,502.7C1129.0,495.3 1130.1,487.7 1132.2,487.7C1134.3,487.7 1135.4,496.6 1137.5,504.4C1139.6,512.1 1140.6,526.4 1142.7,526.4C1144.8,526.4 1145.9,518.8 1148.0,514.1C1149.8,510.2 1150.6,504.8 1152.4,504.8C1154.2,504.8 1155.0,510.5 1156.8,520.3C1158.9,532.1 1160.0,558.1 1162.1,559.0C1167.0,559.9 1169.5,559.9 1174.4,559.9C1176.5,559.9 1177.6,556.2 1179.7,554.6C1181.8,553.0 1182.9,554.6 1185.0,552.0C1187.1,549.4 1188.2,507.1 1190.3,478.0C1192.1,453.9 1192.9,419.0 1194.7,419.0C1196.5,419.0 1197.3,448.1 1199.1,478.0C1200.9,507.9 1201.7,566.1 1203.5,568.7C1204.9,571.3 1205.6,569.1 1207.0,571.3C1209.8,575.8 1211.2,585.4 1214.0,585.4C1215.1,585.4 1215.6,585.4 1216.7,584.3C1219.5,583.2 1220.9,541.4 1223.7,537.9C1225.1,534.4 1225.9,537.9 1227.3,534.4C1229.1,530.9 1229.9,507.0 1231.7,495.6C1233.5,484.2 1234.3,477.5 1236.1,477.5C1237.9,477.5 1238.7,484.3 1240.5,492.1C1242.6,501.4 1243.6,519.4 1245.7,520.3C1250.3,521.2 1252.6,520.3 1257.2,521.2C1260.0,522.1 1261.3,523.7 1264.1,524.7C1266.2,525.5 1267.3,524.7 1269.4,525.6C1272.2,526.5 1273.6,532.6 1276.4,532.6C1279.9,532.6 1281.7,529.4 1285.2,527.3C1287.0,526.2 1287.8,526.7 1289.6,524.7C1293.1,520.7 1294.9,512.4 1298.4,512.4C1301.6,512.4 1303.1,520.2 1306.3,523.8C1308.1,525.8 1308.9,524.2 1310.7,526.4C1313.9,530.4 1315.5,539.3 1318.7,539.3C1320.8,539.3 1321.8,530.1 1323.9,525.6C1326.0,521.1 1327.1,516.8 1329.2,516.8C1332.7,516.8 1334.5,527.3 1338.0,531.7C1340.1,534.3 1341.2,533.1 1343.3,534.4C1346.5,536.3 1348.0,536.9 1351.2,539.6C1353.0,541.1 1353.8,542.3 1355.6,545.0C1357.4,547.7 1358.2,552.9 1360.0,552.9C1362.5,552.9 1363.7,534.4 1366.2,525.6C1368.0,519.4 1368.8,515.4 1370.6,515.4C1373.1,515.4 1374.3,521.0 1376.8,523.8C1378.9,526.1 1379.9,523.8 1382.0,528.2C1384.8,532.6 1386.3,543.7 1389.1,550.2C1390.9,554.2 1391.7,550.2 1393.5,554.6C1396.3,559.0 1397.7,585.4 1400.5,585.4C1401.6,585.4 1402.1,585.4 1403.2,584.3C1406.7,583.2 1408.5,569.2 1412.0,569.2C1416.6,569.2 1418.8,569.2 1423.4,569.2C1426.6,569.2 1428.1,585.4 1431.3,585.4C1432.4,585.4 1432.9,585.4 1434.0,584.3C1436.1,583.2 1437.2,537.5 1439.3,513.2C1440.9,494.4 1441.8,476.6 1443.4,476.6C1445.2,476.6 1446.1,508.8 1447.9,530.8C1449.7,552.3 1450.5,585.4 1452.3,585.4C1453.7,585.4 1454.4,585.4 1455.8,584.3C1457.9,583.2 1459.0,575.1 1461.1,571.3C1462.5,568.8 1463.2,570.6 1464.6,568.7C1469.2,562.4 1471.5,568.7 1476.1,550.6C1477.9,532.5 1478.7,510.4 1480.5,495.6C1482.3,480.8 1483.1,476.6 1484.9,476.6C1486.7,476.6 1487.5,487.7 1489.3,495.6C1491.4,505.2 1492.5,517.7 1494.6,520.3C1496.7,522.9 1497.8,521.6 1499.9,522.9C1503.1,524.8 1504.6,524.2 1507.8,528.2C1511.0,532.2 1512.5,542.8 1515.7,542.8C1517.8,542.8 1518.9,535.1 1521.0,530.8C1523.1,526.5 1524.2,523.0 1526.3,521.2C1530.5,517.7 1532.6,517.6 1536.8,517.6C1541.0,517.6 1543.2,518.7 1547.4,520.3C1551.3,521.8 1553.2,525.2 1557.1,525.2C1559.5,525.2 1560.8,521.2 1563.2,519.4C1565.7,517.5 1566.9,519.4 1569.4,515.9C1572.9,512.4 1574.7,497.7 1578.2,497.7C1581.4,497.7 1582.9,509.4 1586.1,515.0C1587.9,518.1 1588.7,516.8 1590.5,519.4C1593.7,524.0 1595.3,533.0 1598.5,533.0C1600.6,533.0 1601.6,527.3 1603.7,520.3C1606.0,512.7 1607.1,496.5 1609.4,496.5C1611.4,496.5 1612.3,503.4 1614.3,511.5C1616.4,520.3 1617.5,538.8 1619.6,538.8C1621.7,538.8 1622.8,533.4 1624.9,529.1C1627.0,524.9 1628.0,517.6 1630.1,517.6C1631.5,517.6 1632.1,521.6 1633.5,525.6C1635.3,530.8 1636.1,536.6 1637.9,540.5C1639.7,544.4 1640.5,542.3 1642.3,544.9C1644.1,547.5 1644.9,550.6 1646.7,553.7C1648.3,556.6 1649.2,559.9 1650.8,559.9C1653.0,559.9 1654.2,542.2 1656.4,530.8C1658.4,520.8 1659.3,506.5 1661.3,506.5C1663.2,506.5 1664.2,518.0 1666.1,530.8C1667.9,542.5 1668.7,564.3 1670.5,567.8C1671.9,571.3 1672.6,569.0 1674.0,571.3C1676.8,576.0 1678.3,585.4 1681.1,585.4C1681.8,585.4 1682.1,585.4 1682.8,584.3C1684.9,583.2 1686.0,513.0 1688.1,478.0C1689.9,449.0 1690.7,424.3 1692.5,424.3C1694.3,424.3 1695.1,451.8 1696.9,478.0C1699.0,509.6 1700.1,568.7 1702.2,568.7C1706.8,568.7 1709.0,568.7 1713.6,568.7C1716.8,568.7 1718.3,585.4 1721.5,585.4C1722.6,585.4 1723.1,585.4 1724.2,584.3C1727.7,583.2 1729.5,546.8 1733.0,543.2C1734.8,539.6 1735.6,542.8 1737.4,539.6C1739.5,535.8 1740.6,529.1 1742.7,525.6C1744.8,522.1 1745.9,523.6 1748.0,522.0C1750.4,520.1 1751.7,516.8 1754.1,516.8C1760.1,516.8 1763.1,516.8 1769.1,517.1C1775.4,517.4 1778.6,519.9 1784.9,519.9C1786.7,519.9 1787.5,516.5 1789.3,513.2C1791.8,508.5 1793.0,500.0 1795.5,500.0C1799.7,500.0 1801.9,504.1 1806.1,504.1C1810.7,504.1 1812.9,490.7 1817.5,490.7C1821.3,490.7 1823.2,495.6 1827.0,495.6C1830.5,495.6 1832.3,486.0 1835.8,486.0C1840.8,486.0 1843.2,486.0 1848.2,486.0C1850.0,486.0 1850.8,488.7 1852.6,495.6C1854.4,502.5 1855.2,520.3 1857.0,520.3C1859.4,520.3 1860.7,520.1 1863.1,519.9C1865.9,519.7 1867.4,519.9 1870.2,519.4C1873.7,518.9 1875.5,511.8 1879.0,511.8C1881.4,511.8 1882.7,518.5 1885.1,522.0C1886.9,524.5 1887.7,524.7 1889.5,527.0C1892.0,530.3 1893.2,533.2 1895.7,536.1C1897.8,538.6 1898.9,536.6 1901.0,540.5C1903.4,545.0 1904.7,552.8 1907.1,557.3C1909.2,561.2 1910.3,559.7 1912.4,561.7C1915.2,564.4 1916.7,569.2 1919.5,569.2C1924.1,569.2 1926.3,569.2 1930.9,569.2C1933.0,569.2 1934.1,543.3 1936.2,513.2C1938.2,485.4 1939.1,424.3 1941.1,424.3C1943.0,424.3 1944.0,447.9 1945.9,478.0C1947.7,505.6 1948.5,566.1 1950.3,568.7C1951.7,571.3 1952.4,569.1 1953.8,571.3C1956.6,575.8 1958.0,585.4 1960.8,585.4C1965.8,585.4 1968.2,585.4 1973.2,585.4C1976.8,585.4 1978.6,514.2 1982.2,512.8C1986.5,511.4 1988.7,512.8 1993.0,511.4C1996.9,510.0 1998.8,481.0 2002.7,481.0C2007.1,481.0 2009.4,481.0 2013.8,481.0C2018.0,481.0 2020.1,513.5 2024.3,516.6C2028.1,519.7 2029.9,519.7 2033.7,519.7C2038.3,519.7 2040.6,496.7 2045.2,496.7C2049.2,496.7 2051.3,511.3 2055.3,511.3C2059.5,511.3 2061.6,469.4 2065.8,469.4C2069.5,469.4 2075.0,500.0 2075.0,500.0" fill="none" stroke="#f2b705" stroke-width="2" stroke-linejoin="round"/>
<path d="M697.1,535.2C697.1,535.2 699.5,538.9 701.1,548.5C702.9,559.0 703.7,585.4 705.5,585.4C739.7,585.4 756.7,585.4 790.9,585.4C794.8,585.4 796.7,559.4 800.6,559.4C804.1,559.4 805.9,585.4 809.4,585.4C818.9,585.4 823.7,585.4 833.2,585.4C836.0,585.4 837.4,575.3 840.2,570.5C842.3,566.9 843.4,567.5 845.5,564.3C848.2,560.2 849.5,552.3 852.2,552.3C855.8,552.3 857.7,585.4 861.3,585.4C878.9,585.4 887.6,585.4 905.2,585.4C908.9,585.4 910.7,568.7 914.4,568.7C918.1,568.7 920.0,585.4 923.7,585.4C929.0,585.4 931.6,585.4 936.9,585.4C940.4,585.4 942.2,532.6 945.7,532.6C948.9,532.6 950.4,585.4 953.6,585.4C1000.7,585.4 1024.3,585.4 1071.4,585.4C1074.9,585.4 1076.7,569.2 1080.2,569.2C1088.7,569.2 1092.9,569.2 1101.4,569.6C1104.9,570.0 1106.7,585.4 1110.2,585.4C1140.5,585.4 1155.6,585.4 1185.9,585.4C1189.4,585.4 1191.2,517.1 1194.7,517.1C1198.2,517.1 1200.0,585.4 1203.5,585.4C1221.1,585.4 1229.9,585.4 1247.5,585.4C1251.1,585.4 1252.9,568.7 1256.5,568.7C1260.2,568.7 1262.1,585.4 1265.8,585.4C1333.1,585.4 1366.7,585.4 1434.0,585.4C1437.7,585.4 1439.6,568.7 1443.3,568.7C1447.0,568.7 1448.8,585.4 1452.5,585.4C1490.8,585.4 1510.0,585.4 1548.3,585.4C1552.0,585.4 1553.9,559.9 1557.6,559.9C1561.3,559.9 1563.1,585.4 1566.8,585.4C1588.6,585.4 1599.5,585.4 1621.3,585.4C1624.8,585.4 1626.6,568.7 1630.1,568.7C1633.7,568.7 1635.4,585.4 1639.0,585.4C1656.9,585.4 1665.8,585.4 1683.7,585.4C1687.2,585.4 1689.0,535.8 1692.5,535.8C1696.0,535.8 1697.8,585.4 1701.3,585.4C1727.7,585.4 1740.9,585.4 1767.3,585.4C1770.7,585.4 1772.4,559.9 1775.8,559.9C1779.4,559.9 1781.3,564.3 1784.9,569.2C1788.8,574.5 1790.7,585.4 1794.6,585.4C1816.4,585.4 1827.2,585.4 1849.0,585.4C1852.8,585.4 1854.6,568.7 1858.4,568.7C1862.0,568.7 1863.9,585.4 1867.5,585.4C1893.6,585.4 1906.6,585.4 1932.7,585.4C1936.2,585.4 1938.0,546.7 1941.5,546.7C1945.0,546.7 1946.8,585.4 1950.3,585.4C1980.3,585.4 1995.3,585.4 2025.3,585.4C2029.1,585.4 2031.0,568.9 2034.8,568.9C2038.6,568.9 2040.4,585.4 2044.2,585.4C2045.0,585.4 2045.5,585.4 2046.3,585.4C2049.9,585.4 2051.7,559.5 2055.3,559.5C2059.2,559.5 2061.2,585.4 2065.1,585.4C2069.1,585.4 2075.0,585.4 2075.0,585.4L2075.0,586L697.1,586Z" fill="#43c441" fill-opacity="0.2"/><path d="M697.1,535.2C697.1,535.2 699.5,538.9 701.1,548.5C702.9,559.0 703.7,585.4 705.5,585.4C739.7,585.4 756.7,585.4 790.9,585.4C794.8,585.4 796.7,559.4 800.6,559.4C804.1,559.4 805.9,585.4 809.4,585.4C818.9,585.4 823.7,585.4 833.2,585.4C836.0,585.4 837.4,575.3 840.2,570.5C842.3,566.9 843.4,567.5 845.5,564.3C848.2,560.2 849.5,552.3 852.2,552.3C855.8,552.3 857.7,585.4 861.3,585.4C878.9,585.4 887.6,585.4 905.2,585.4C908.9,585.4 910.7,568.7 914.4,568.7C918.1,568.7 920.0,585.4 923.7,585.4C929.0,585.4 931.6,585.4 936.9,585.4C940.4,585.4 942.2,532.6 945.7,532.6C948.9,532.6 950.4,585.4 953.6,585.4C1000.7,585.4 1024.3,585.4 1071.4,585.4C1074.9,585.4 1076.7,569.2 1080.2,569.2C1088.7,569.2 1092.9,569.2 1101.4,569.6C1104.9,570.0 1106.7,585.4 1110.2,585.4C1140.5,585.4 1155.6,585.4 1185.9,585.4C1189.4,585.4 1191.2,517.1 1194.7,517.1C1198.2,517.1 1200.0,585.4 1203.5,585.4C1221.1,585.4 1229.9,585.4 1247.5,585.4C1251.1,585.4 1252.9,568.7 1256.5,568.7C1260.2,568.7 1262.1,585.4 1265.8,585.4C1333.1,585.4 1366.7,585.4 1434.0,585.4C1437.7,585.4 1439.6,568.7 1443.3,568.7C1447.0,568.7 1448.8,585.4 1452.5,585.4C1490.8,585.4 1510.0,585.4 1548.3,585.4C1552.0,585.4 1553.9,559.9 1557.6,559.9C1561.3,559.9 1563.1,585.4 1566.8,585.4C1588.6,585.4 1599.5,585.4 1621.3,585.4C1624.8,585.4 1626.6,568.7 1630.1,568.7C1633.7,568.7 1635.4,585.4 1639.0,585.4C1656.9,585.4 1665.8,585.4 1683.7,585.4C1687.2,585.4 1689.0,535.8 1692.5,535.8C1696.0,535.8 1697.8,585.4 1701.3,585.4C1727.7,585.4 1740.9,585.4 1767.3,585.4C1770.7,585.4 1772.4,559.9 1775.8,559.9C1779.4,559.9 1781.3,564.3 1784.9,569.2C1788.8,574.5 1790.7,585.4 1794.6,585.4C1816.4,585.4 1827.2,585.4 1849.0,585.4C1852.8,585.4 1854.6,568.7 1858.4,568.7C1862.0,568.7 1863.9,585.4 1867.5,585.4C1893.6,585.4 1906.6,585.4 1932.7,585.4C1936.2,585.4 1938.0,546.7 1941.5,546.7C1945.0,546.7 1946.8,585.4 1950.3,585.4C1980.3,585.4 1995.3,585.4 2025.3,585.4C2029.1,585.4 2031.0,568.9 2034.8,568.9C2038.6,568.9 2040.4,585.4 2044.2,585.4C2045.0,585.4 2045.5,585.4 2046.3,585.4C2049.9,585.4 2051.7,559.5 2055.3,559.5C2059.2,559.5 2061.2,585.4 2065.1,585.4C2069.1,585.4 2075.0,585.4 2075.0,585.4" fill="none" stroke="#43c441" stroke-width="2" stroke-linejoin="round"/>
<path d="M697.1,526.4C697.1,526.4 698.5,526.7 699.4,530.8C700.4,535.5 701.0,539.3 702.0,548.5C703.0,557.7 703.6,567.9 704.6,576.6C705.3,582.6 705.7,585.4 706.4,585.4C723.6,585.4 732.3,585.4 749.5,585.4C752.7,585.4 754.3,568.7 757.5,568.7C762.4,568.7 764.9,568.7 769.8,568.7C773.0,568.7 774.5,585.4 777.7,585.4C841.0,585.4 872.7,585.4 936.0,585.4C937.8,585.4 938.6,540.3 940.4,522.0C942.5,500.0 943.6,484.7 945.7,484.7C947.5,484.7 948.3,501.9 950.1,522.0C951.9,542.1 952.7,585.4 954.5,585.4C988.7,585.4 1005.7,585.4 1039.9,585.4C1043.8,585.4 1045.7,568.7 1049.6,568.7C1053.1,568.7 1054.9,585.4 1058.4,585.4C1109.0,585.4 1134.4,585.4 1185.0,585.4C1188.9,585.4 1190.8,529.1 1194.7,529.1C1198.2,529.1 1200.0,585.4 1203.5,585.4C1213.0,585.4 1217.8,585.4 1227.3,585.4C1230.8,585.4 1232.6,568.7 1236.1,568.7C1239.6,568.7 1241.4,585.4 1244.9,585.4C1320.5,585.4 1358.4,585.4 1434.0,585.4C1437.7,585.4 1439.6,559.9 1443.3,559.9C1447.0,559.9 1448.8,585.4 1452.5,585.4C1461.9,585.4 1466.7,585.4 1476.1,585.4C1479.6,585.4 1481.4,559.9 1484.9,559.9C1488.4,559.9 1490.2,585.4 1493.7,585.4C1528.2,585.4 1545.5,585.4 1580.0,585.4C1583.5,585.4 1585.3,568.7 1588.8,568.7C1592.3,568.7 1594.1,585.4 1597.6,585.4C1631.7,585.4 1648.7,585.4 1682.8,585.4C1686.7,585.4 1688.6,509.7 1692.5,509.7C1696.0,509.7 1697.8,585.4 1701.3,585.4C1710.8,585.4 1715.6,585.4 1725.1,585.4C1728.6,585.4 1730.4,569.2 1733.9,569.2C1737.4,569.2 1739.2,585.4 1742.7,585.4C1768.7,585.4 1781.8,585.4 1807.8,585.4C1811.3,585.4 1813.1,546.7 1816.6,546.7C1820.8,546.7 1822.8,585.4 1827.0,585.4C1827.7,585.4 1828.1,585.4 1828.8,585.4C1832.3,585.4 1834.1,568.7 1837.6,568.7C1841.0,568.7 1842.6,585.4 1846.0,585.4C1880.3,585.4 1897.5,585.4 1931.8,585.4C1935.7,585.4 1937.6,488.9 1941.5,488.9C1945.0,488.9 1946.8,585.4 1950.3,585.4C2000.2,585.4 2075.0,585.4 2075.0,585.4L2075.0,586L697.1,586Z" fill="#e8453c" fill-opacity="0.2"/><path d="M697.1,526.4C697.1,526.4 698.5,526.7 699.4,530.8C700.4,535.5 701.0,539.3 702.0,548.5C703.0,557.7 703.6,567.9 704.6,576.6C705.3,582.6 705.7,585.4 706.4,585.4C723.6,585.4 732.3,585.4 749.5,585.4C752.7,585.4 754.3,568.7 757.5,568.7C762.4,568.7 764.9,568.7 769.8,568.7C773.0,568.7 774.5,585.4 777.7,585.4C841.0,585.4 872.7,585.4 936.0,585.4C937.8,585.4 938.6,540.3 940.4,522.0C942.5,500.0 943.6,484.7 945.7,484.7C947.5,484.7 948.3,501.9 950.1,522.0C951.9,542.1 952.7,585.4 954.5,585.4C988.7,585.4 1005.7,585.4 1039.9,585.4C1043.8,585.4 1045.7,568.7 1049.6,568.7C1053.1,568.7 1054.9,585.4 1058.4,585.4C1109.0,585.4 1134.4,585.4 1185.0,585.4C1188.9,585.4 1190.8,529.1 1194.7,529.1C1198.2,529.1 1200.0,585.4 1203.5,585.4C1213.0,585.4 1217.8,585.4 1227.3,585.4C1230.8,585.4 1232.6,568.7 1236.1,568.7C1239.6,568.7 1241.4,585.4 1244.9,585.4C1320.5,585.4 1358.4,585.4 1434.0,585.4C1437.7,585.4 1439.6,559.9 1443.3,559.9C1447.0,559.9 1448.8,585.4 1452.5,585.4C1461.9,585.4 1466.7,585.4 1476.1,585.4C1479.6,585.4 1481.4,559.9 1484.9,559.9C1488.4,559.9 1490.2,585.4 1493.7,585.4C1528.2,585.4 1545.5,585.4 1580.0,585.4C1583.5,585.4 1585.3,568.7 1588.8,568.7C1592.3,568.7 1594.1,585.4 1597.6,585.4C1631.7,585.4 1648.7,585.4 1682.8,585.4C1686.7,585.4 1688.6,509.7 1692.5,509.7C1696.0,509.7 1697.8,585.4 1701.3,585.4C1710.8,585.4 1715.6,585.4 1725.1,585.4C1728.6,585.4 1730.4,569.2 1733.9,569.2C1737.4,569.2 1739.2,585.4 1742.7,585.4C1768.7,585.4 1781.8,585.4 1807.8,585.4C1811.3,585.4 1813.1,546.7 1816.6,546.7C1820.8,546.7 1822.8,585.4 1827.0,585.4C1827.7,585.4 1828.1,585.4 1828.8,585.4C1832.3,585.4 1834.1,568.7 1837.6,568.7C1841.0,568.7 1842.6,585.4 1846.0,585.4C1880.3,585.4 1897.5,585.4 1931.8,585.4C1935.7,585.4 1937.6,488.9 1941.5,488.9C1945.0,488.9 1946.8,585.4 1950.3,585.4C2000.2,585.4 2075.0,585.4 2075.0,585.4" fill="none" stroke="#e8453c" stroke-width="2" stroke-linejoin="round"/>
</svg>
<div class="t" style="left:600px;width:87px;text-align:right;top:414px;font-size:11px;color:#666">1.5K</div>
<div class="t" style="left:600px;width:87px;text-align:right;top:449px;font-size:11px;color:#666">347</div>
<div class="t" style="left:600px;width:87px;text-align:right;top:484px;font-size:11px;color:#666">80</div>
<div class="t" style="left:600px;width:87px;text-align:right;top:519px;font-size:11px;color:#666">18</div>
<div class="t" style="left:600px;width:87px;text-align:right;top:554px;font-size:11px;color:#666">3</div>
<div class="t" style="left:647px;width:100px;text-align:center;top:591px;font-size:11px;color:#666">29 Jan.</div>
<div class="t" style="left:896px;width:100px;text-align:center;top:591px;font-size:11px;color:#666">30 Jan.</div>
<div class="t" style="left:1145px;width:100px;text-align:center;top:591px;font-size:11px;color:#666">31 Jan.</div>
<div class="t" style="left:1394px;width:100px;text-align:center;top:591px;font-size:11px;color:#666">1 Feb.</div>
<div class="t" style="left:1643px;width:100px;text-align:center;top:591px;font-size:11px;color:#666">2 Feb.</div>
<div class="t" style="left:1892px;width:100px;text-align:center;top:591px;font-size:11px;color:#666">3 Feb.</div>
<div class="a" style="left:1322px;top:614px;width:8px;height:3px;background:#2ecc71"></div>
<div class="t" style="left:1333px;top:608px;font-size:13px;color:#333">Positiv</div>
<div class="a" style="left:1395px;top:614px;width:8px;height:3px;background:#f2b705"></div>
<div class="t" style="left:1406px;top:608px;font-size:13px;color:#333">Neutral</div>
<div class="a" style="left:1471px;top:614px;width:8px;height:3px;background:#e8453c"></div>
<div class="t" style="left:1482px;top:608px;font-size:13px;color:#333">Negativ</div>
<div class="card" style="left:638px;top:667px;width:1588px;height:224px"></div>
<div class="t" style="left:650px;top:681px;font-size:14px;font-weight:bold;color:#37474f">ÜBERSICHT</div>
<div class="a" style="left:638px;top:709px;width:1588px;height:48px;background:#cfdae2"></div>
<div class="a" style="left:638px;top:798px;width:1588px;height:42px;background:#f5f6f8"></div>
<div class="a" style="left:638px;top:797px;width:1588px;height:1px;background:#e3e8eb"></div>
<div class="a" style="left:638px;top:839px;width:1588px;height:1px;background:#e3e8eb"></div>
<div class="a" style="left:638px;top:881px;width:1588px;height:1px;background:#e3e8eb"></div>
<div class="t" style="left:612px;width:300px;text-align:center;top:726px;font-size:13px;color:#455a64">Sentiment</div>
<div class="t" style="left:862px;width:300px;text-align:center;top:726px;font-size:13px;color:#455a64">Ergebnisse</div>
<div class="t" style="left:1106px;width:300px;text-align:center;top:726px;font-size:13px;color:#455a64">Autoren</div>
<div class="t" style="left:1354px;width:300px;text-align:center;top:726px;font-size:13px;color:#455a64">Engagement</div>
<div class="t" style="left:1621px;width:300px;text-align:center;top:726px;font-size:13px;color:#455a64">Net Sentiment</div>
<div class="t" style="left:1917px;width:300px;text-align:center;top:726px;font-size:13px;color:#455a64">Potenzielle Reichweite</div>
<div class="t" style="left:654px;top:768px;font-size:18px;color:#37474f">Positiv</div>
<div class="t" style="left:912px;width:200px;text-align:center;top:764px;font-size:17px;color:#37474f">66</div>
<svg class="a" style="left:990px;top:783px" width="12" height="12" viewBox="0 0 12 12"><circle cx="6" cy="6" r="6" fill="#2ecc71"/><path d="M3.5 8.5 L8.3 3.7 M4.6 3.5 H8.5 V7.4" fill="none" stroke="#fff" stroke-width="1.4"/></svg>
<div class="t" style="left:1004px;top:784px;font-size:11.2px;color:#2ecc71">24.5%</div>
<div class="t" style="left:1156px;width:200px;text-align:center;top:764px;font-size:17px;color:#37474f">41</div>
<svg class="a" style="left:1249px;top:783px" width="12" height="12" viewBox="0 0 12 12"><circle cx="6" cy="6" r="6" fill="#546e7a"/><path d="M2.8 6 H8.8 M6.2 3.3 L8.9 6 L6.2 8.7" fill="none" stroke="#fff" stroke-width="1.4"/></svg>
<div class="t" style="left:1404px;width:200px;text-align:center;top:764px;font-size:17px;color:#37474f">0</div>
<svg class="a" style="left:1497px;top:783px" width="12" height="12" viewBox="0 0 12 12"><circle cx="6" cy="6" r="6" fill="#546e7a"/><path d="M2.8 6 H8.8 M6.2 3.3 L8.9 6 L6.2 8.7" fill="none" stroke="#fff" stroke-width="1.4"/></svg>
<div class="t" style="left:1671px;width:200px;text-align:center;top:764px;font-size:17px;color:#37474f">100.00%</div>
<svg class="a" style="left:1764px;top:783px" width="12" height="12" viewBox="0 0 12 12"><circle cx="6" cy="6" r="6" fill="#546e7a"/><path d="M2.8 6 H8.8 M6.2 3.3 L8.9 6 L6.2 8.7" fill="none" stroke="#fff" stroke-width="1.4"/></svg>
<div class="t" style="left:1967px;width:200px;text-align:center;top:764px;font-size:17px;color:#37474f">25.3M</div>
<svg class="a" style="left:2045px;top:783px" width="12" height="12" viewBox="0 0 12 12"><circle cx="6" cy="6" r="6" fill="#f4435b"/><path d="M3.5 3.5 L8.3 8.3 M8.5 4.6 V8.5 H4.6" fill="none" stroke="#fff" stroke-width="1.4"/></svg>
<div class="t" style="left:2059px;top:784px;font-size:11.2px;color:#f4435b">13.8%</div>
<div class="t" style="left:654px;top:810px;font-size:18px;color:#37474f">Neutral</div>
<div class="t" style="left:912px;width:200px;text-align:center;top:806px;font-size:17px;color:#37474f">6.9K</div>
<svg class="a" style="left:990px;top:825px" width="12" height="12" viewBox="0 0 12 12"><circle cx="6" cy="6" r="6" fill="#2ecc71"/><path d="M3.5 8.5 L8.3 3.7 M4.6 3.5 H8.5 V7.4" fill="none" stroke="#fff" stroke-width="1.4"/></svg>
<div class="t" style="left:1004px;top:826px;font-size:11.2px;color:#2ecc71">28.4%</div>
<div class="t" style="left:1156px;width:200px;text-align:center;top:806px;font-size:17px;color:#37474f">1.6K</div>
<svg class="a" style="left:1234px;top:825px" width="12" height="12" viewBox="0 0 12 12"><circle cx="6" cy="6" r="6" fill="#2ecc71"/><path d="M3.5 8.5 L8.3 3.7 M4.6 3.5 H8.5 V7.4" fill="none" stroke="#fff" stroke-width="1.4"/></svg>
<div class="t" style="left:1248px;top:826px;font-size:11.2px;color:#2ecc71">14.8%</div>
<div class="t" style="left:1404px;width:200px;text-align:center;top:806px;font-size:17px;color:#37474f">0</div>
<svg class="a" style="left:1497px;top:825px" width="12" height="12" viewBox="0 0 12 12"><circle cx="6" cy="6" r="6" fill="#546e7a"/><path d="M2.8 6 H8.8 M6.2 3.3 L8.9 6 L6.2 8.7" fill="none" stroke="#fff" stroke-width="1.4"/></svg>
<div class="t" style="left:1671px;width:200px;text-align:center;top:806px;font-size:17px;color:#37474f">0.00%</div>
<svg class="a" style="left:1764px;top:825px" width="12" height="12" viewBox="0 0 12 12"><circle cx="6" cy="6" r="6" fill="#546e7a"/><path d="M2.8 6 H8.8 M6.2 3.3 L8.9 6 L6.2 8.7" fill="none" stroke="#fff" stroke-width="1.4"/></svg>
<div class="t" style="left:1967px;width:200px;text-align:center;top:806px;font-size:17px;color:#37474f">4.6B</div>
<svg class="a" style="left:2045px;top:825px" width="12" height="12" viewBox="0 0 12 12"><circle cx="6" cy="6" r="6" fill="#2ecc71"/><path d="M3.5 8.5 L8.3 3.7 M4.6 3.5 H8.5 V7.4" fill="none" stroke="#fff" stroke-width="1.4"/></svg>
<div class="t" style="left:2059px;top:826px;font-size:11.2px;color:#2ecc71">12.1%</div>
<div class="t" style="left:654px;top:852px;font-size:18px;color:#37474f">Negativ</div>
<div class="t" style="left:912px;width:200px;text-align:center;top:848px;font-size:17px;color:#37474f">184</div>
<svg class="a" style="left:990px;top:867px" width="12" height="12" viewBox="0 0 12 12"><circle cx="6" cy="6" r="6" fill="#f4435b"/><path d="M3.5 3.5 L8.3 8.3 M8.5 4.6 V8.5 H4.6" fill="none" stroke="#fff" stroke-width="1.4"/></svg>
<div class="t" style="left:1004px;top:868px;font-size:11.2px;color:#f4435b">24.3%</div>
<div class="t" style="left:1156px;width:200px;text-align:center;top:848px;font-size:17px;color:#37474f">97</div>
<svg class="a" style="left:1240px;top:867px" width="12" height="12" viewBox="0 0 12 12"><circle cx="6" cy="6" r="6" fill="#f4435b"/><path d="M3.5 3.5 L8.3 8.3 M8.5 4.6 V8.5 H4.6" fill="none" stroke="#fff" stroke-width="1.4"/></svg>
<div class="t" style="left:1254px;top:868px;font-size:11.2px;color:#f4435b">50%</div>
<div class="t" style="left:1404px;width:200px;text-align:center;top:848px;font-size:17px;color:#37474f">0</div>
<svg class="a" style="left:1497px;top:867px" width="12" height="12" viewBox="0 0 12 12"><circle cx="6" cy="6" r="6" fill="#546e7a"/><path d="M2.8 6 H8.8 M6.2 3.3 L8.9 6 L6.2 8.7" fill="none" stroke="#fff" stroke-width="1.4"/></svg>
<div class="t" style="left:1671px;width:200px;text-align:center;top:848px;font-size:17px;color:#37474f">-100.00%</div>
<svg class="a" style="left:1764px;top:867px" width="12" height="12" viewBox="0 0 12 12"><circle cx="6" cy="6" r="6" fill="#546e7a"/><path d="M2.8 6 H8.8 M6.2 3.3 L8.9 6 L6.2 8.7" fill="none" stroke="#fff" stroke-width="1.4"/></svg>
<div class="t" style="left:1967px;width:200px;text-align:center;top:848px;font-size:17px;color:#37474f">23M</div>
<svg class="a" style="left:2045px;top:867px" width="12" height="12" viewBox="0 0 12 12"><circle cx="6" cy="6" r="6" fill="#f4435b"/><path d="M3.5 3.5 L8.3 8.3 M8.5 4.6 V8.5 H4.6" fill="none" stroke="#fff" stroke-width="1.4"/></svg>
<div class="t" style="left:2059px;top:868px;font-size:11.2px;color:#f4435b">66.8%</div>
<div class="card" style="left:638px;top:907px;width:786px;height:284px"></div>
<div class="t" style="left:650.0px;top:921.0px;font-size:14px;color:#37474f;font-weight:bold">VERTEILUNG - LÄNDER/ REGIONEN</div>
<div class="a" style="left:638px;top:948px;width:786px;height:1px;background:#e6eaed"></div>
<div class="t" style="left:1085px;width:300px;text-align:right;top:969px;font-size:17.5px;color:#37474f">7.2K Ergebnisse</div>
<div class="a" style="left:711.5px;top:995px;width:1px;height:123px;background:#cfd4d8"></div>
<div class="t" style="left:682.0px;width:60px;text-align:center;top:1124px;font-size:11px;color:#7a868c">0%</div>
<div class="a" style="left:844.9px;top:995px;width:1px;height:123px;background:#e6e6e6"></div>
<div class="t" style="left:815.4px;width:60px;text-align:center;top:1124px;font-size:11px;color:#7a868c">20%</div>
<div class="a" style="left:978.3px;top:995px;width:1px;height:123px;background:#e6e6e6"></div>
<div class="t" style="left:948.8px;width:60px;text-align:center;top:1124px;font-size:11px;color:#7a868c">40%</div>
<div class="a" style="left:1111.7px;top:995px;width:1px;height:123px;background:#e6e6e6"></div>
<div class="t" style="left:1082.2px;width:60px;text-align:center;top:1124px;font-size:11px;color:#7a868c">60%</div>
<div class="a" style="left:1245.1px;top:995px;width:1px;height:123px;background:#e6e6e6"></div>
<div class="t" style="left:1215.6px;width:60px;text-align:center;top:1124px;font-size:11px;color:#7a868c">80%</div>
<div class="a" style="left:1378.5px;top:995px;width:1px;height:123px;background:#e6e6e6"></div>
<div class="t" style="left:1349.0px;width:60px;text-align:center;top:1124px;font-size:11px;color:#7a868c">100%</div>
<div class="a" style="left:712.5px;top:1001.0px;width:565.0px;height:33px;background:#ffdd00"></div>
<div class="a" style="left:1278.0px;top:1001.0px;width:29.0px;height:33px;background:#d35f4b"></div>
<div class="a" style="left:1308.0px;top:1001.0px;width:71.0px;height:33px;background:#00508f"></div>
<div class="a" style="left:1215px;top:1006.0px;width:54px;height:24px;border-radius:12px;background:#fff3c2"></div>
<div class="t" style="left:1215px;width:54px;text-align:center;top:1011.0px;font-size:14.5px;font-weight:bold;color:#263238">84.8%</div>
<div class="t" style="left:601px;width:100px;text-align:right;top:1014.5px;font-size:11px;color:#66747b">Positiv</div>
<div class="a" style="left:712.5px;top:1040.5px;width:643.5px;height:33px;background:#ffdd00"></div>
<div class="a" style="left:1357.0px;top:1040.5px;width:12.0px;height:33px;background:#d35f4b"></div>
<div class="a" style="left:1370.0px;top:1040.5px;width:7.0px;height:33px;background:#00508f"></div>
<div class="a" style="left:1378.0px;top:1040.5px;width:1.5px;height:33px;background:#00957a"></div>
<div class="a" style="left:1293px;top:1045.5px;width:54px;height:24px;border-radius:12px;background:#fff3c2"></div>
<div class="t" style="left:1293px;width:54px;text-align:center;top:1050.5px;font-size:14.5px;font-weight:bold;color:#263238">96.6%</div>
<div class="t" style="left:601px;width:100px;text-align:right;top:1054.0px;font-size:11px;color:#66747b">Neutral</div>
<div class="a" style="left:712.5px;top:1079.5px;width:641.0px;height:33px;background:#ffdd00"></div>
<div class="a" style="left:1354.5px;top:1079.5px;width:19.5px;height:33px;background:#d35f4b"></div>
<div class="a" style="left:1375.0px;top:1079.5px;width:4.0px;height:33px;background:#00508f"></div>
<div class="a" style="left:1290px;top:1085.0px;width:54px;height:24px;border-radius:12px;background:#fff3c2"></div>
<div class="t" style="left:1290px;width:54px;text-align:center;top:1090.0px;font-size:14.5px;font-weight:bold;color:#263238">96.2%</div>
<div class="t" style="left:601px;width:100px;text-align:right;top:1093.0px;font-size:11px;color:#66747b">Negativ</div>
<svg class="a" style="left:698px;top:1142px" width="12" height="12" viewBox="0 0 12 12"><path d="M1.4 11 V1.4 H11 M2.2 2.2 L10.8 10.8" fill="none" stroke="#2ee08a" stroke-width="2.7"/></svg>
<div class="t" style="left:712.0px;top:1142.5px;font-size:12.5px;color:#2ee08a;">27%</div>
<div class="a" style="left:742px;top:1144px;width:8px;height:8px;background:#ffdd00"></div>
<div class="t" style="left:754.0px;top:1142.0px;font-size:13px;color:#455a64;">Deutschland</div>
<svg class="a" style="left:847px;top:1142px" width="12" height="12" viewBox="0 0 12 12"><path d="M1.4 11 V1.4 H11 M2.2 2.2 L10.8 10.8" fill="none" stroke="#2ee08a" stroke-width="2.7"/></svg>
<div class="t" style="left:861.0px;top:1142.5px;font-size:12.5px;color:#2ee08a;">24%</div>
<div class="a" style="left:891px;top:1144px;width:8px;height:8px;background:#d35f4b"></div>
<div class="t" style="left:903.0px;top:1142.0px;font-size:13px;color:#455a64;">Schweiz</div>
<svg class="a" style="left:971px;top:1142px" width="12" height="12" viewBox="0 0 12 12"><path d="M1.4 1 V10.6 H11 M2.2 9.8 L10.8 1.2" fill="none" stroke="#fb5d6b" stroke-width="2.7"/></svg>
<div class="t" style="left:985.0px;top:1142.5px;font-size:12.5px;color:#fb5d6b;">6%</div>
<div class="a" style="left:1009px;top:1144px;width:8px;height:8px;background:#00508f"></div>
<div class="t" style="left:1020.0px;top:1142.0px;font-size:13px;color:#455a64;">Österreich</div>
<svg class="a" style="left:1100px;top:1142px" width="12" height="12" viewBox="0 0 12 12"><path d="M1.4 11 V1.4 H11 M2.2 2.2 L10.8 10.8" fill="none" stroke="#2ee08a" stroke-width="2.7"/></svg>
<div class="t" style="left:1114.0px;top:1142.5px;font-size:12.5px;color:#2ee08a;">1000%</div>
<div class="a" style="left:1158px;top:1144px;width:8px;height:8px;background:#c8175a"></div>
<div class="t" style="left:1169.0px;top:1142.0px;font-size:13px;color:#455a64;">Luxemburg</div>
<svg class="a" style="left:1256px;top:1142px" width="12" height="12" viewBox="0 0 12 12"><path d="M1.4 1 V10.6 H11 M2.2 9.8 L10.8 1.2" fill="none" stroke="#fb5d6b" stroke-width="2.7"/></svg>
<div class="t" style="left:1269.0px;top:1142.5px;font-size:12.5px;color:#fb5d6b;">50%</div>
<div class="a" style="left:1300px;top:1144px;width:8px;height:8px;background:#e05aa8"></div>
<div class="t" style="left:1310.0px;top:1142.0px;font-size:13px;color:#455a64;">Italien</div>
<svg class="a" style="left:884px;top:1161px" width="12" height="12" viewBox="0 0 12 12"><path d="M1.4 1 V10.6 H11 M2.2 9.8 L10.8 1.2" fill="none" stroke="#fb5d6b" stroke-width="2.7"/></svg>
<div class="t" style="left:897.0px;top:1161.5px;font-size:12.5px;color:#fb5d6b;">83%</div>
<div class="a" style="left:927px;top:1163px;width:8px;height:8px;background:#b5b83b"></div>
<div class="t" style="left:939.0px;top:1161.0px;font-size:13px;color:#455a64;">Vereinigtes Königreich</div>
<div class="a" style="left:1091px;top:1163px;width:8px;height:8px;background:#00957a"></div>
<div class="t" style="left:1102.0px;top:1161.0px;font-size:13px;color:#455a64;">Dänemark</div>
<div class="card" style="left:1440px;top:907px;width:786px;height:284px"></div>
<div class="t" style="left:1452.0px;top:921.0px;font-size:14px;color:#37474f;font-weight:bold">VERTEILUNG - SPRACHEN</div>
<div class="a" style="left:1440px;top:948px;width:786px;height:1px;background:#e6eaed"></div>
<div class="t" style="left:1888px;width:300px;text-align:right;top:969px;font-size:17.5px;color:#37474f">7.2K Ergebnisse</div>
<div class="a" style="left:1513.0px;top:995px;width:1px;height:141px;background:#cfd4d8"></div>
<div class="t" style="left:1483.5px;width:60px;text-align:center;top:1141px;font-size:11px;color:#7a868c">0%</div>
<div class="a" style="left:1646.4px;top:995px;width:1px;height:141px;background:#e6e6e6"></div>
<div class="t" style="left:1616.9px;width:60px;text-align:center;top:1141px;font-size:11px;color:#7a868c">20%</div>
<div class="a" style="left:1779.8px;top:995px;width:1px;height:141px;background:#e6e6e6"></div>
<div class="t" style="left:1750.3px;width:60px;text-align:center;top:1141px;font-size:11px;color:#7a868c">40%</div>
<div class="a" style="left:1913.2px;top:995px;width:1px;height:141px;background:#e6e6e6"></div>
<div class="t" style="left:1883.7px;width:60px;text-align:center;top:1141px;font-size:11px;color:#7a868c">60%</div>
<div class="a" style="left:2046.6px;top:995px;width:1px;height:141px;background:#e6e6e6"></div>
<div class="t" style="left:2017.1px;width:60px;text-align:center;top:1141px;font-size:11px;color:#7a868c">80%</div>
<div class="a" style="left:2180.0px;top:995px;width:1px;height:141px;background:#e6e6e6"></div>
<div class="t" style="left:2150.5px;width:60px;text-align:center;top:1141px;font-size:11px;color:#7a868c">100%</div>
<div class="a" style="left:1514.0px;top:1001.0px;width:656.0px;height:38.5px;background:#069fd9"></div>
<div class="a" style="left:2170.8px;top:1001.0px;width:10.2px;height:38.5px;background:#e84e1b"></div>
<div class="a" style="left:2099px;top:1008.0px;width:58px;height:24px;border-radius:12px;background:#c7e6f6"></div>
<div class="t" style="left:2099px;width:58px;text-align:center;top:1012.5px;font-size:16px;font-weight:bold;color:#263238">98.5%</div>
<div class="t" style="left:1403px;width:100px;text-align:right;top:1017.2px;font-size:11px;color:#66747b">Positiv</div>
<div class="a" style="left:1514.0px;top:1046.0px;width:666.0px;height:38.5px;background:#069fd9"></div>
<div class="a" style="left:2180.3px;top:1046.0px;width:1.7px;height:38.5px;background:#ffd400"></div>
<div class="a" style="left:2110px;top:1053.0px;width:61px;height:24px;border-radius:12px;background:#c7e6f6"></div>
<div class="t" style="left:2110px;width:61px;text-align:center;top:1057.5px;font-size:16px;font-weight:bold;color:#263238">100%</div>
<div class="t" style="left:1403px;width:100px;text-align:right;top:1062.2px;font-size:11px;color:#66747b">Neutral</div>
<div class="a" style="left:1514.0px;top:1091.0px;width:667.0px;height:38.5px;background:#069fd9"></div>
<div class="a" style="left:2110px;top:1098.0px;width:61px;height:24px;border-radius:12px;background:#c7e6f6"></div>
<div class="t" style="left:2110px;width:61px;text-align:center;top:1102.5px;font-size:16px;font-weight:bold;color:#263238">100%</div>
<div class="t" style="left:1403px;width:100px;text-align:right;top:1107.2px;font-size:11px;color:#66747b">Negativ</div>
<svg class="a" style="left:1664px;top:1159px" width="12" height="12" viewBox="0 0 12 12"><path d="M1.4 11 V1.4 H11 M2.2 2.2 L10.8 10.8" fill="none" stroke="#2ee08a" stroke-width="2.7"/></svg>
<div class="t" style="left:1677.0px;top:1159.5px;font-size:12.5px;color:#2ee08a;">26%</div>
<div class="a" style="left:1707px;top:1161px;width:8px;height:8px;background:#069fd9"></div>
<div class="t" style="left:1718.0px;top:1159.0px;font-size:13px;color:#455a64;">Deutsch</div>
<svg class="a" style="left:1787px;top:1159px" width="12" height="12" viewBox="0 0 12 12"><path d="M1.4 1 V10.6 H11 M2.2 9.8 L10.8 1.2" fill="none" stroke="#fb5d6b" stroke-width="2.7"/></svg>
<div class="t" style="left:1801.0px;top:1159.5px;font-size:12.5px;color:#fb5d6b;">50%</div>
<div class="a" style="left:1831px;top:1161px;width:8px;height:8px;background:#e84e1b"></div>
<div class="t" style="left:1842.0px;top:1159.0px;font-size:13px;color:#455a64;">Englisch</div>
<div class="a" style="left:1914px;top:1161px;width:8px;height:8px;background:#ffd400"></div>
<div class="t" style="left:1925.0px;top:1159.0px;font-size:13px;color:#455a64;">Italienisch</div>
<div class="a" style="left:2069px;top:141px;width:472px;height:567px;background:#fff;box-shadow:0 4px 12px rgba(0,0,0,.35);z-index:10">
<div class="t" style="left:25.0px;top:19.0px;font-size:13px;color:#607d8b;letter-spacing:0.6px">1 T</div>
<div class="t" style="left:55.5px;top:19.0px;font-size:13px;color:#607d8b;letter-spacing:0.6px">7 T</div>
<div class="t" style="left:86.5px;top:19.0px;font-size:13px;color:#607d8b;letter-spacing:0.6px">30 T</div>
<div class="t" style="left:124.0px;top:19.0px;font-size:13px;color:#607d8b;letter-spacing:0.6px">3 M</div>
<div class="t" style="left:158.5px;top:19.0px;font-size:13px;color:#607d8b;letter-spacing:0.6px">6 M</div>
<div class="t" style="left:193.0px;top:19.0px;font-size:13px;color:#607d8b;letter-spacing:0.6px">1 J</div>
<div class="a" style="left:236px;top:10px;width:1px;height:32px;background:#cfd8dc"></div>
<svg class="a" style="left:277px;top:17px" width="17" height="17" viewBox="0 0 17 17"><rect x="1" y="2.5" width="15" height="13.5" rx="1" fill="none" stroke="#263238" stroke-width="2"/><rect x="1" y="2.5" width="15" height="4" fill="#263238"/><rect x="4" y="0" width="2" height="3.5" fill="#263238"/><rect x="11" y="0" width="2" height="3.5" fill="#263238"/></svg>
<div class="t" style="left:305.5px;top:18.5px;font-size:13.5px;color:#263238;letter-spacing:0.35px">29/01/26 – 03/02/26</div>
<svg class="a" style="left:71px;top:68px" width="14" height="12" viewBox="0 0 14 12"><g fill="none" stroke="#666" stroke-width="2"><polyline points="6.5,1 2,6 6.5,11"/><polyline points="12,1 7.5,6 12,11"/></g></svg>
<svg class="a" style="left:94px;top:68px" width="8" height="12" viewBox="0 0 8 12"><polyline points="6,1 2,6 6,11" fill="none" stroke="#666" stroke-width="2"/></svg>
<div class="t" style="left:118.0px;top:69.0px;font-size:12px;color:#607d8b;">Januar, 2026</div>
<div class="t" style="left:284.0px;top:69.0px;font-size:12px;color:#607d8b;">Februar, 2026</div>
<svg class="a" style="left:369px;top:68px" width="8" height="12" viewBox="0 0 8 12"><polyline points="2,1 6,6 2,11" fill="none" stroke="#666" stroke-width="2"/></svg>
<svg class="a" style="left:387px;top:68px" width="14" height="12" viewBox="0 0 14 12"><g fill="none" stroke="#666" stroke-width="2"><polyline points="2,1 6.5,6 2,11"/><polyline points="7.5,1 12,6 7.5,11"/></g></svg>
<div class="a" style="left:68px;top:88px;width:335px;height:1px;background:#eceff1"></div>
<div class="t" style="left:49.0px;width:40px;text-align:center;top:99.0px;font-size:11.5px;color:#666;font-weight:bold">Mo</div>
<div class="t" style="left:73.0px;width:40px;text-align:center;top:99.0px;font-size:11.5px;color:#666;font-weight:bold">Di</div>
<div class="t" style="left:97.0px;width:40px;text-align:center;top:99.0px;font-size:11.5px;color:#666;font-weight:bold">Mi</div>
<div class="t" style="left:121.0px;width:40px;text-align:center;top:99.0px;font-size:11.5px;color:#666;font-weight:bold">Do</div>
<div class="t" style="left:145.0px;width:40px;text-align:center;top:99.0px;font-size:11.5px;color:#666;font-weight:bold">Fr</div>
<div class="t" style="left:169.0px;width:40px;text-align:center;top:99.0px;font-size:11.5px;color:#666;font-weight:bold">Sa</div>
<div class="t" style="left:193.0px;width:40px;text-align:center;top:99.0px;font-size:11.5px;color:#666;font-weight:bold">So</div>
<div class="t" style="left:239.0px;width:40px;text-align:center;top:99.0px;font-size:11.5px;color:#666;font-weight:bold">Mo</div>
<div class="t" style="left:263.0px;width:40px;text-align:center;top:99.0px;font-size:11.5px;color:#666;font-weight:bold">Di</div>
<div class="t" style="left:287.0px;width:40px;text-align:center;top:99.0px;font-size:11.5px;color:#666;font-weight:bold">Mi</div>
<div class="t" style="left:311.0px;width:40px;text-align:center;top:99.0px;font-size:11.5px;color:#666;font-weight:bold">Do</div>
<div class="t" style="left:335.0px;width:40px;text-align:center;top:99.0px;font-size:11.5px;color:#666;font-weight:bold">Fr</div>
<div class="t" style="left:359.0px;width:40px;text-align:center;top:99.0px;font-size:11.5px;color:#666;font-weight:bold">Sa</div>
<div class="t" style="left:383.0px;width:40px;text-align:center;top:99.0px;font-size:11.5px;color:#666;font-weight:bold">So</div>
<div class="a" style="left:129px;top:210px;width:24px;height:24px;background:#00446f;border-radius:4px 0 0 4px"></div>
<div class="a" style="left:153px;top:210px;width:24px;height:24px;background:#cfdae3;"></div>
<div class="a" style="left:177px;top:210px;width:24px;height:24px;background:#cfdae3;"></div>
<div class="a" style="left:391px;top:114px;width:24px;height:24px;background:#cfdae3;"></div>
<div class="a" style="left:247px;top:138px;width:24px;height:24px;background:#cfdae3;"></div>
<div class="a" style="left:271px;top:138px;width:24px;height:24px;background:#00446f;border-radius:0 4px 4px 0"></div>
<div class="t" style="left:49.0px;width:40px;text-align:center;top:119.0px;font-size:13px;color:#dde3e6;">29</div>
<div class="t" style="left:73.0px;width:40px;text-align:center;top:119.0px;font-size:13px;color:#dde3e6;">30</div>
<div class="t" style="left:97.0px;width:40px;text-align:center;top:119.0px;font-size:13px;color:#dde3e6;">31</div>
<div class="t" style="left:121.0px;width:40px;text-align:center;top:119.0px;font-size:13px;color:#455a64;">1</div>
<div class="t" style="left:145.0px;width:40px;text-align:center;top:119.0px;font-size:13px;color:#455a64;">2</div>
<div class="t" style="left:169.0px;width:40px;text-align:center;top:119.0px;font-size:13px;color:#455a64;">3</div>
<div class="t" style="left:193.0px;width:40px;text-align:center;top:119.0px;font-size:13px;color:#455a64;">4</div>
<div class="t" style="left:49.0px;width:40px;text-align:center;top:143.0px;font-size:13px;color:#455a64;">5</div>
<div class="t" style="left:73.0px;width:40px;text-align:center;top:143.0px;font-size:13px;color:#455a64;">6</div>
<div class="t" style="left:97.0px;width:40px;text-align:center;top:143.0px;font-size:13px;color:#455a64;">7</div>
<div class="t" style="left:121.0px;width:40px;text-align:center;top:143.0px;font-size:13px;color:#455a64;">8</div>
<div class="t" style="left:145.0px;width:40px;text-align:center;top:143.0px;font-size:13px;color:#455a64;">9</div>
<div class="t" style="left:169.0px;width:40px;text-align:center;top:143.0px;font-size:13px;color:#455a64;">10</div>
<div class="t" style="left:193.0px;width:40px;text-align:center;top:143.0px;font-size:13px;color:#455a64;">11</div>
<div class="t" style="left:49.0px;width:40px;text-align:center;top:167.0px;font-size:13px;color:#455a64;">12</div>
<div class="t" style="left:73.0px;width:40px;text-align:center;top:167.0px;font-size:13px;color:#455a64;">13</div>
<div class="t" style="left:97.0px;width:40px;text-align:center;top:167.0px;font-size:13px;color:#455a64;">14</div>
<div class="t" style="left:121.0px;width:40px;text-align:center;top:167.0px;font-size:13px;color:#455a64;">15</div>
<div class="t" style="left:145.0px;width:40px;text-align:center;top:167.0px;font-size:13px;color:#455a64;">16</div>
<div class="t" style="left:169.0px;width:40px;text-align:center;top:167.0px;font-size:13px;color:#455a64;">17</div>
<div class="t" style="left:193.0px;width:40px;text-align:center;top:167.0px;font-size:13px;color:#455a64;">18</div>
<div class="t" style="left:49.0px;width:40px;text-align:center;top:191.0px;font-size:13px;color:#455a64;">19</div>
<div class="t" style="left:73.0px;width:40px;text-align:center;top:191.0px;font-size:13px;color:#455a64;">20</div>
<div class="t" style="left:97.0px;width:40px;text-align:center;top:191.0px;font-size:13px;color:#455a64;">21</div>
<div class="t" style="left:121.0px;width:40px;text-align:center;top:191.0px;font-size:13px;color:#455a64;">22</div>
<div class="t" style="left:145.0px;width:40px;text-align:center;top:191.0px;font-size:13px;color:#455a64;">23</div>
<div class="t" style="left:169.0px;width:40px;text-align:center;top:191.0px;font-size:13px;color:#455a64;">24</div>
<div class="t" style="left:193.0px;width:40px;text-align:center;top:191.0px;font-size:13px;color:#455a64;">25</div>
<div class="t" style="left:49.0px;width:40px;text-align:center;top:215.0px;font-size:13px;color:#455a64;">26</div>
<div class="t" style="left:73.0px;width:40px;text-align:center;top:215.0px;font-size:13px;color:#455a64;">27</div>
<div class="t" style="left:97.0px;width:40px;text-align:center;top:215.0px;font-size:13px;color:#455a64;">28</div>
<div class="t" style="left:121.0px;width:40px;text-align:center;top:215.0px;font-size:13px;color:#fff;font-weight:bold">29</div>
<div class="t" style="left:145.0px;width:40px;text-align:center;top:215.0px;font-size:13px;color:#5b6b74;">30</div>
<div class="t" style="left:169.0px;width:40px;text-align:center;top:215.0px;font-size:13px;color:#5b6b74;">31</div>
<div class="t" style="left:193.0px;width:40px;text-align:center;top:215.0px;font-size:13px;color:#dde3e6;">1</div>
<div class="t" style="left:49.0px;width:40px;text-align:center;top:239.0px;font-size:13px;color:#dde3e6;">2</div>
<div class="t" style="left:73.0px;width:40px;text-align:center;top:239.0px;font-size:13px;color:#dde3e6;">3</div>
<div class="t" style="left:97.0px;width:40px;text-align:center;top:239.0px;font-size:13px;color:#dde3e6;text-decoration:underline">4</div>
<div class="t" style="left:121.0px;width:40px;text-align:center;top:239.0px;font-size:13px;color:#dde3e6;">5</div>
<div class="t" style="left:145.0px;width:40px;text-align:center;top:239.0px;font-size:13px;color:#dde3e6;">6</div>
<div class="t" style="left:169.0px;width:40px;text-align:center;top:239.0px;font-size:13px;color:#dde3e6;">7</div>
<div class="t" style="left:193.0px;width:40px;text-align:center;top:239.0px;font-size:13px;color:#dde3e6;">8</div>
<div class="t" style="left:239.0px;width:40px;text-align:center;top:119.0px;font-size:13px;color:#dde3e6;">26</div>
<div class="t" style="left:263.0px;width:40px;text-align:center;top:119.0px;font-size:13px;color:#dde3e6;">27</div>
<div class="t" style="left:287.0px;width:40px;text-align:center;top:119.0px;font-size:13px;color:#dde3e6;">28</div>
<div class="t" style="left:311.0px;width:40px;text-align:center;top:119.0px;font-size:13px;color:#dde3e6;">29</div>
<div class="t" style="left:335.0px;width:40px;text-align:center;top:119.0px;font-size:13px;color:#dde3e6;">30</div>
<div class="t" style="left:359.0px;width:40px;text-align:center;top:119.0px;font-size:13px;color:#dde3e6;">31</div>
<div class="t" style="left:383.0px;width:40px;text-align:center;top:119.0px;font-size:13px;color:#5b6b74;">1</div>
<div class="t" style="left:239.0px;width:40px;text-align:center;top:143.0px;font-size:13px;color:#5b6b74;">2</div>
<div class="t" style="left:263.0px;width:40px;text-align:center;top:143.0px;font-size:13px;color:#fff;font-weight:bold">3</div>
<div class="t" style="left:287.0px;width:40px;text-align:center;top:143.0px;font-size:13px;color:#455a64;text-decoration:underline">4</div>
<div class="t" style="left:311.0px;width:40px;text-align:center;top:143.0px;font-size:13px;color:#455a64;">5</div>
<div class="t" style="left:335.0px;width:40px;text-align:center;top:143.0px;font-size:13px;color:#455a64;">6</div>
<div class="t" style="left:359.0px;width:40px;text-align:center;top:143.0px;font-size:13px;color:#455a64;">7</div>
<div class="t" style="left:383.0px;width:40px;text-align:center;top:143.0px;font-size:13px;color:#455a64;">8</div>
<div class="t" style="left:239.0px;width:40px;text-align:center;top:167.0px;font-size:13px;color:#455a64;">9</div>
<div class="t" style="left:263.0px;width:40px;text-align:center;top:167.0px;font-size:13px;color:#455a64;">10</div>
<div class="t" style="left:287.0px;width:40px;text-align:center;top:167.0px;font-size:13px;color:#455a64;">11</div>
<div class="t" style="left:311.0px;width:40px;text-align:center;top:167.0px;font-size:13px;color:#455a64;">12</div>
<div class="t" style="left:335.0px;width:40px;text-align:center;top:167.0px;font-size:13px;color:#455a64;">13</div>
<div class="t" style="left:359.0px;width:40px;text-align:center;top:167.0px;font-size:13px;color:#455a64;">14</div>
<div class="t" style="left:383.0px;width:40px;text-align:center;top:167.0px;font-size:13px;color:#455a64;">15</div>
<div class="t" style="left:239.0px;width:40px;text-align:center;top:191.0px;font-size:13px;color:#455a64;">16</div>
<div class="t" style="left:263.0px;width:40px;text-align:center;top:191.0px;font-size:13px;color:#455a64;">17</div>
<div class="t" style="left:287.0px;width:40px;text-align:center;top:191.0px;font-size:13px;color:#455a64;">18</div>
<div class="t" style="left:311.0px;width:40px;text-align:center;top:191.0px;font-size:13px;color:#455a64;">19</div>
<div class="t" style="left:335.0px;width:40px;text-align:center;top:191.0px;font-size:13px;color:#455a64;">20</div>
<div class="t" style="left:359.0px;width:40px;text-align:center;top:191.0px;font-size:13px;color:#455a64;">21</div>
<div class="t" style="left:383.0px;width:40px;text-align:center;top:191.0px;font-size:13px;color:#455a64;">22</div>
<div class="t" style="left:239.0px;width:40px;text-align:center;top:215.0px;font-size:13px;color:#455a64;">23</div>
<div class="t" style="left:263.0px;width:40px;text-align:center;top:215.0px;font-size:13px;color:#455a64;">24</div>
<div class="t" style="left:287.0px;width:40px;text-align:center;top:215.0px;font-size:13px;color:#455a64;">25</div>
<div class="t" style="left:311.0px;width:40px;text-align:center;top:215.0px;font-size:13px;color:#455a64;">26</div>
<div class="t" style="left:335.0px;width:40px;text-align:center;top:215.0px;font-size:13px;color:#455a64;">27</div>
<div class="t" style="left:359.0px;width:40px;text-align:center;top:215.0px;font-size:13px;color:#455a64;">28</div>
<div class="t" style="left:383.0px;width:40px;text-align:center;top:215.0px;font-size:13px;color:#dde3e6;">1</div>
<div class="t" style="left:239.0px;width:40px;text-align:center;top:239.0px;font-size:13px;color:#dde3e6;">2</div>
<div class="t" style="left:263.0px;width:40px;text-align:center;top:239.0px;font-size:13px;color:#dde3e6;">3</div>
<div class="t" style="left:287.0px;width:40px;text-align:center;top:239.0px;font-size:13px;color:#dde3e6;">4</div>
<div class="t" style="left:311.0px;width:40px;text-align:center;top:239.0px;font-size:13px;color:#dde3e6;">5</div>
<div class="t" style="left:335.0px;width:40px;text-align:center;top:239.0px;font-size:13px;color:#dde3e6;">6</div>
<div class="t" style="left:359.0px;width:40px;text-align:center;top:239.0px;font-size:13px;color:#dde3e6;">7</div>
<div class="t" style="left:383.0px;width:40px;text-align:center;top:239.0px;font-size:13px;color:#dde3e6;">8</div>
<div class="t" style="left:8.0px;top:277.0px;font-size:13px;color:#546e7a;">Von</div>
<div class="t" style="left:38.5px;top:277.0px;font-size:13px;color:#1d5a85;">29/01</div>
<div class="t" style="left:246.0px;top:277.0px;font-size:13px;color:#546e7a;">An</div>
<div class="t" style="left:270.0px;top:277.0px;font-size:13px;color:#1d5a85;">03/02</div>
<div class="a" style="left:81px;top:272px;width:25px;height:23px;border:1px solid #cfd8dc;border-radius:3px"></div>
<div class="t" style="left:81px;width:25px;text-align:center;top:278px;font-size:11px;color:#37474f">00</div>
<div class="a" style="left:118px;top:272px;width:25px;height:23px;border:1px solid #cfd8dc;border-radius:3px"></div>
<div class="t" style="left:118px;width:25px;text-align:center;top:278px;font-size:11px;color:#37474f">00</div>
<div class="a" style="left:155px;top:272px;width:25px;height:23px;border:1px solid #cfd8dc;border-radius:3px"></div>
<div class="t" style="left:155px;width:25px;text-align:center;top:278px;font-size:11px;color:#37474f">00</div>
<div class="a" style="left:312px;top:272px;width:25px;height:23px;border:1px solid #cfd8dc;border-radius:3px"></div>
<div class="t" style="left:312px;width:25px;text-align:center;top:278px;font-size:11px;color:#37474f">23</div>
<div class="a" style="left:349px;top:272px;width:25px;height:23px;border:1px solid #cfd8dc;border-radius:3px"></div>
<div class="t" style="left:349px;width:25px;text-align:center;top:278px;font-size:11px;color:#37474f">59</div>
<div class="a" style="left:387px;top:272px;width:25px;height:23px;border:1px solid #cfd8dc;border-radius:3px"></div>
<div class="t" style="left:387px;width:25px;text-align:center;top:278px;font-size:11px;color:#37474f">59</div>
<div class="t" style="left:111.0px;top:278.0px;font-size:12px;color:#546e7a;">:</div>
<div class="t" style="left:148.0px;top:278.0px;font-size:12px;color:#546e7a;">:</div>
<div class="t" style="left:342.0px;top:278.0px;font-size:12px;color:#546e7a;">:</div>
<div class="t" style="left:379.0px;top:278.0px;font-size:12px;color:#546e7a;">:</div>
<svg class="a" style="left:8px;top:316px" width="16" height="16" viewBox="0 0 16 16"><circle cx="7.7" cy="7.9" r="7.7" fill="#b0bec5"/><path d="M3.2 3.6 Q5 2.4 7.4 2.6 L7.2 3.6 L8.5 3.9 L9 3.3 L11.7 4.9 Q10.5 5.8 9.4 6.1 L8.4 7.6 Q8.2 8.8 7.6 9.1 L6.6 8.3 Q5 6.8 3.6 5.6Z M6.3 10.3 L8.2 10.4 Q7.6 11.8 6.6 12.6Z" fill="#fff"/></svg>
<div class="t" style="left:33.5px;top:309.0px;font-size:12.5px;color:#aab7bf;">Projekt-Zeitzone: (GMT +01:00) Amsterdam, Berlin, Bern, Rome,</div>
<div class="t" style="left:33.5px;top:327.0px;font-size:12.5px;color:#aab7bf;">Stockholm, Vienna</div>
<div class="a" style="left:5px;top:355px;width:456px;height:1px;background:#eceff1"></div>
<div class="t" style="left:9.0px;top:370.0px;font-size:12px;color:#607d8b;">VORDEFINIERTE EVENTS</div>
<div class="t" style="left:9.0px;top:406.0px;font-size:12.5px;color:#b0bec5;">1 MONAT</div>
<div class="t" style="left:82.2px;top:406.0px;font-size:13px;color:#546e7a;">05/1-04/2</div>
<div class="t" style="left:159.5px;top:406.0px;font-size:13px;color:#546e7a;">05/12-04/1</div>
<div class="t" style="left:244.0px;top:406.0px;font-size:13px;color:#546e7a;">05/11-04/12</div>
<div class="t" style="left:335.8px;top:406.0px;font-size:13px;color:#546e7a;">05/10-04/11</div>
<div class="t" style="left:9.0px;top:439.0px;font-size:12.5px;color:#b0bec5;">1 WOCHE</div>
<div class="t" style="left:82.2px;top:439.0px;font-size:13px;color:#546e7a;">29/1-04/2</div>
<div class="t" style="left:159.5px;top:439.0px;font-size:13px;color:#546e7a;">22/1-28/1</div>
<div class="t" style="left:237.0px;top:439.0px;font-size:13px;color:#546e7a;">15/1-21/1</div>
<div class="t" style="left:313.7px;top:439.0px;font-size:13px;color:#546e7a;">08/1-14/1</div>
<div class="t" style="left:13.8px;top:472.0px;font-size:13px;color:#546e7a;">Heute</div>
<div class="t" style="left:67.0px;top:472.0px;font-size:13px;color:#546e7a;">Gestern</div>
<div class="t" style="left:131.6px;top:472.0px;font-size:13px;color:#546e7a;">Aktuelle Woche</div>
<div class="t" style="left:239.5px;top:472.0px;font-size:13px;color:#546e7a;">Letzte Woche</div>
<div class="t" style="left:337.0px;top:472.0px;font-size:13px;color:#546e7a;">Aktueller Monat</div>
<div class="t" style="left:13.8px;top:505.0px;font-size:13px;color:#546e7a;">Letzter Monat</div>
<div class="t" style="left:113.0px;top:505.0px;font-size:13px;color:#546e7a;">Aktuelles Quartal</div>
<div class="t" style="left:231.0px;top:505.0px;font-size:13px;color:#546e7a;">Letztes Quartal</div>
<div class="t" style="left:338.0px;top:505.0px;font-size:13px;color:#546e7a;">Laufendes Jahr</div>
<div class="t" style="left:14.0px;top:538.0px;font-size:13px;color:#546e7a;">Vorheriges Jahr</div>
</div>
</body></html>
